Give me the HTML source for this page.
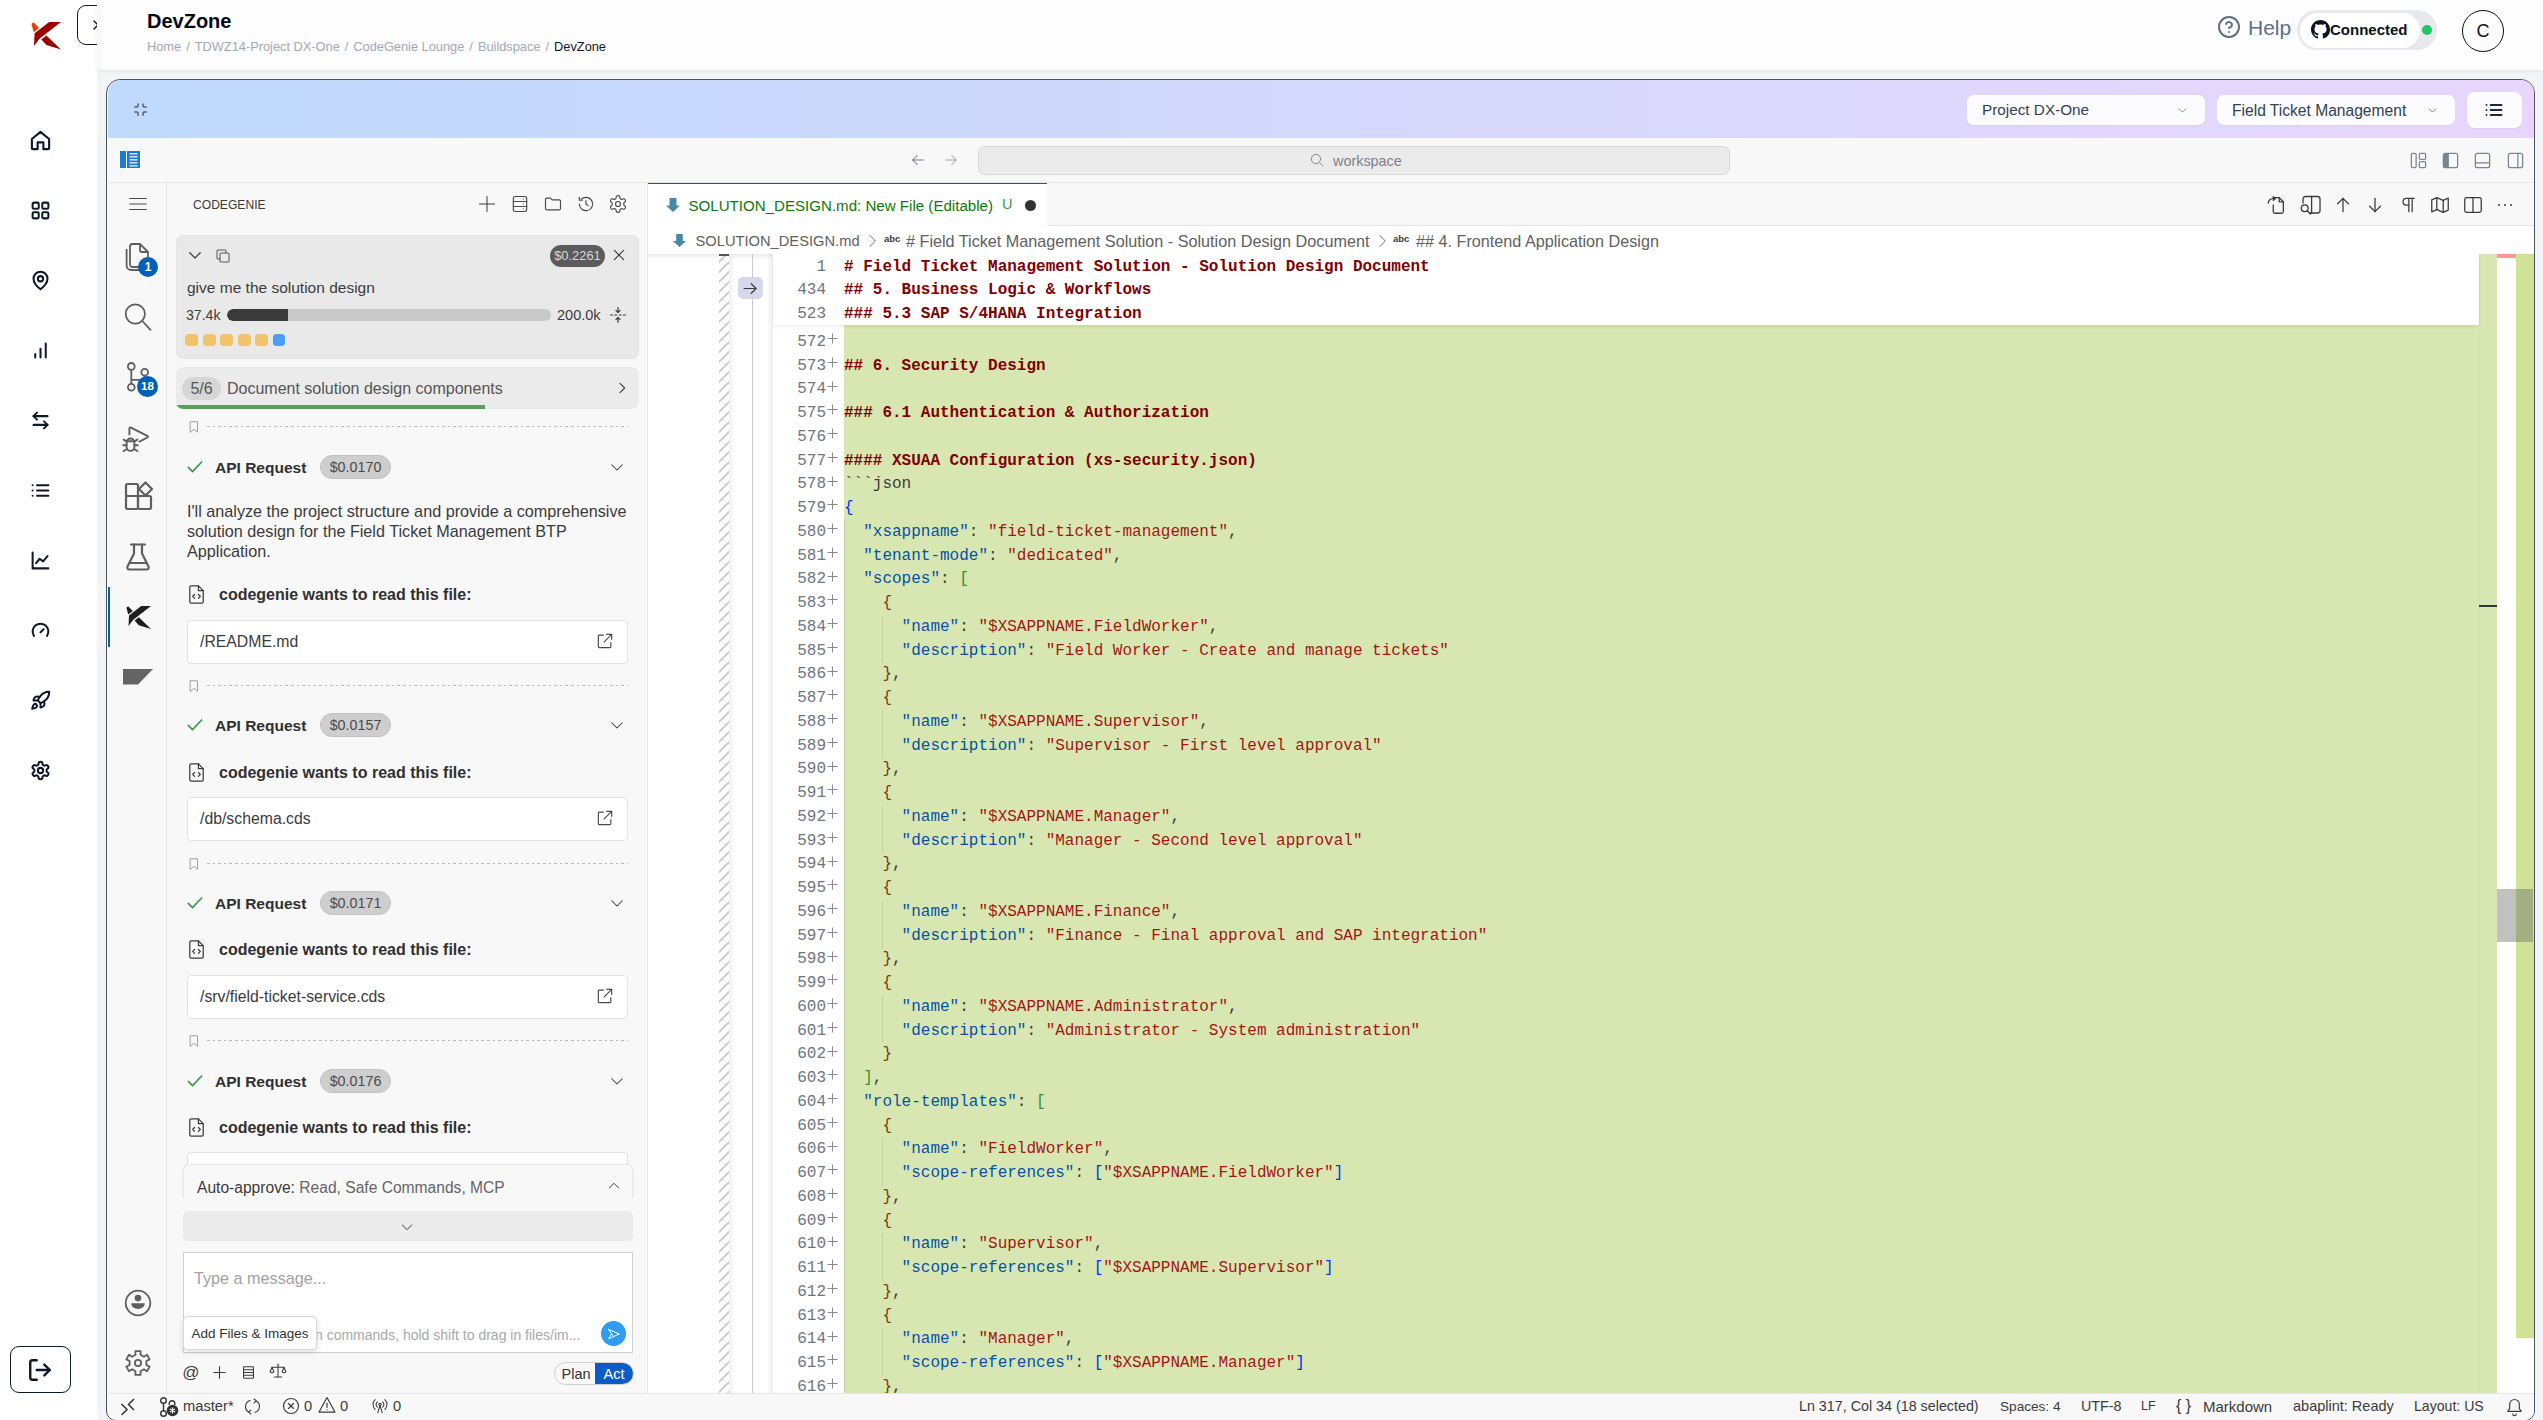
<!DOCTYPE html><html><head><meta charset="utf-8"><style>
html,body{margin:0;padding:0;width:2543px;height:1420px;overflow:hidden;background:#fff;position:relative;font-family:"Liberation Sans",sans-serif;}
</style></head><body><div style="position:absolute;left:0px;top:0px;width:97px;height:1420px;background:#ffffff;"></div>
<div style="position:absolute;left:77px;top:5px;width:40px;height:40px;border:1.5px solid #111827;border-radius:9px;background:#fff;box-sizing:border-box;"></div>
<svg style="position:absolute;left:88.00px;top:17.00px;" width="16" height="16" viewBox="0 0 24 24" fill="none" stroke="#111827" stroke-width="2.2" stroke-linecap="round" stroke-linejoin="round"><path d="M9 6l6 6-6 6"/></svg>
<div style="position:absolute;left:97px;top:70px;width:2446px;height:1350px;background:#f3f4f6;"></div>
<div style="position:absolute;left:97px;top:0px;width:2446px;height:70px;background:#fdfdfd;box-shadow:0 1px 4px rgba(0,0,0,0.07), inset 8px 0 8px -8px rgba(0,0,0,0.06);"></div>
<div style="position:absolute;left:147px;top:7.00px;height:28px;line-height:28px;font-size:20px;color:#030712;font-weight:700;font-family:'Liberation Sans', sans-serif;white-space:pre;">DevZone</div>
<div style="position:absolute;left:147px;top:37.80px;height:18px;line-height:18px;font-size:12.8px;color:#a3a8b3;font-weight:400;font-family:'Liberation Sans', sans-serif;white-space:pre;"><span style="color:#a3a9b5">Home<span style="margin:0 5px">/</span>TDWZ14-Project DX-One<span style="margin:0 5px">/</span>CodeGenie Lounge<span style="margin:0 5px">/</span>Buildspace<span style="margin:0 5px">/</span></span><span style="color:#111827">DevZone</span></div>
<svg style="position:absolute;left:2217.00px;top:15.00px;" width="24" height="24" viewBox="0 0 24 24" fill="none" stroke="#5f6f86" stroke-width="2" stroke-linecap="round" stroke-linejoin="round"><circle cx="12" cy="12" r="10"/><path d="M9.1 9a3 3 0 0 1 5.8 1c0 2-3 3-3 3"/><path d="M12 17h.01"/></svg>
<div style="position:absolute;left:2248px;top:12.50px;height:29px;line-height:29px;font-size:21px;color:#5f6f86;font-weight:400;font-family:'Liberation Sans', sans-serif;white-space:pre;">Help</div>
<div style="position:absolute;left:2297px;top:10px;width:140px;height:40px;background:#e8e9ee;border-radius:20px;"></div>
<div style="position:absolute;left:2300px;top:13px;width:120px;height:35px;background:#ffffff;border-radius:18px;"></div>
<svg style="position:absolute;left:2311px;top:20px" width="19" height="19" viewBox="0 0 16 16"><path fill="#0b1220" d="M8 0C3.58 0 0 3.58 0 8c0 3.54 2.29 6.53 5.47 7.59.4.07.55-.17.55-.38 0-.19-.01-.82-.01-1.49-2.01.37-2.53-.49-2.69-.94-.09-.23-.48-.94-.82-1.13-.28-.15-.68-.52-.01-.53.63-.01 1.08.58 1.23.82.72 1.21 1.87.87 2.33.66.07-.52.28-.87.51-1.07-1.78-.2-3.64-.89-3.64-3.95 0-.87.31-1.59.82-2.15-.08-.2-.36-1.02.08-2.12 0 0 .67-.21 2.2.82.64-.18 1.32-.27 2-.27.68 0 1.36.09 2 .27 1.53-1.04 2.2-.82 2.2-.82.44 1.1.16 1.92.08 2.12.51.56.82 1.27.82 2.15 0 3.07-1.87 3.75-3.65 3.95.29.25.54.73.54 1.48 0 1.07-.01 1.93-.01 2.2 0 .21.15.46.55.38A8.013 8.013 0 0016 8c0-4.42-3.58-8-8-8z"/></svg>
<div style="position:absolute;left:2330px;top:18.50px;height:21px;line-height:21px;font-size:15px;color:#0b1220;font-weight:700;font-family:'Liberation Sans', sans-serif;white-space:pre;">Connected</div>
<div style="position:absolute;left:2422px;top:25px;width:10px;height:10px;background:#22c55e;border-radius:50%;"></div>
<div style="position:absolute;left:2462px;top:10px;width:42px;height:42px;border:1.5px solid #111;border-radius:50%;box-sizing:border-box;"></div>
<div style="position:absolute;left:2483px;transform:translateX(-50%);top:18.50px;height:25px;line-height:25px;font-size:18px;color:#111;font-weight:400;font-family:'Liberation Sans', sans-serif;white-space:pre;">C</div>
<svg style="position:absolute;left:31px;top:22px" width="30" height="28" viewBox="0 0 30 28"><path d="M0.5 2 2.5 0.3 8.1 6 2.7 10.2z" fill="#e04000"/><path d="M3.6 11.3 18.2 0 30 0 8.4 16.7 3 24z" fill="#9e0000"/><path d="M10.3 17.5 15.4 13.6 30 27.6 15.4 23.1z" fill="#9e0000"/></svg>
<svg style="position:absolute;left:28.50px;top:128.50px;" width="23" height="23" viewBox="0 0 24 24" fill="none" stroke="#0f172a" stroke-width="2.2" stroke-linecap="round" stroke-linejoin="round"><path d="M3 10.5 12 3l9 7.5V20a1 1 0 0 1-1 1h-5v-7h-6v7H4a1 1 0 0 1-1-1z"/></svg>
<svg style="position:absolute;left:29.50px;top:199.50px;" width="21" height="21" viewBox="0 0 24 24" fill="none" stroke="#0f172a" stroke-width="2.3" stroke-linecap="round" stroke-linejoin="round"><rect x="3" y="3" width="7" height="7" rx="1.5"/><rect x="14" y="3" width="7" height="7" rx="1.5"/><rect x="3" y="14" width="7" height="7" rx="1.5"/><rect x="14" y="14" width="7" height="7" rx="1.5"/></svg>
<svg style="position:absolute;left:29.50px;top:269.50px;" width="21" height="21" viewBox="0 0 24 24" fill="none" stroke="#0f172a" stroke-width="2.3" stroke-linecap="round" stroke-linejoin="round"><path d="M20 10c0 6-8 12-8 12s-8-6-8-12a8 8 0 0 1 16 0z"/><circle cx="12" cy="10" r="3"/></svg>
<svg style="position:absolute;left:29.50px;top:339.50px;" width="21" height="21" viewBox="0 0 24 24" fill="none" stroke="#0f172a" stroke-width="2.3" stroke-linecap="round" stroke-linejoin="round"><path d="M6 20v-4"/><path d="M12 20v-10"/><path d="M18 20V4"/></svg>
<svg style="position:absolute;left:29.50px;top:409.50px;" width="21" height="21" viewBox="0 0 24 24" fill="none" stroke="#0f172a" stroke-width="2.3" stroke-linecap="round" stroke-linejoin="round"><path d="M8 3 4 7l4 4"/><path d="M4 7h16"/><path d="m16 21 4-4-4-4"/><path d="M20 17H4"/></svg>
<svg style="position:absolute;left:29.50px;top:479.50px;" width="21" height="21" viewBox="0 0 24 24" fill="none" stroke="#0f172a" stroke-width="2.3" stroke-linecap="round" stroke-linejoin="round"><path d="M8 6h13"/><path d="M8 12h13"/><path d="M8 18h13"/><path d="M3 6h.01"/><path d="M3 12h.01"/><path d="M3 18h.01"/></svg>
<svg style="position:absolute;left:29.50px;top:549.50px;" width="21" height="21" viewBox="0 0 24 24" fill="none" stroke="#0f172a" stroke-width="2.3" stroke-linecap="round" stroke-linejoin="round"><path d="M3 3v18h18"/><path d="m7 15 4-5 4 3 5-6"/></svg>
<svg style="position:absolute;left:29.50px;top:620.50px;" width="21" height="21" viewBox="0 0 24 24" fill="none" stroke="#0f172a" stroke-width="2.3" stroke-linecap="round" stroke-linejoin="round"><path d="M4.5 17a9 9 0 1 1 15 0"/><path d="m12 13 3.5-3.5"/></svg>
<svg style="position:absolute;left:29.50px;top:689.50px;" width="21" height="21" viewBox="0 0 24 24" fill="none" stroke="#0f172a" stroke-width="2.3" stroke-linecap="round" stroke-linejoin="round"><path d="M4.5 16.5c-1.5 1.26-2 5-2 5s3.74-.5 5-2c.71-.84.7-2.13-.09-2.91a2.18 2.18 0 0 0-2.91-.09z"/><path d="m12 15-3-3a22 22 0 0 1 2-3.95A12.88 12.88 0 0 1 22 2c0 2.72-.78 7.5-6 11a22.35 22.35 0 0 1-4 2z"/><path d="M9 12H4s.55-3.03 2-4c1.62-1.08 5 0 5 0"/><path d="M12 15v5s3.03-.55 4-2c1.08-1.62 0-5 0-5"/></svg>
<svg style="position:absolute;left:29.50px;top:759.50px;" width="21" height="21" viewBox="0 0 24 24" fill="none" stroke="#0f172a" stroke-width="2.3" stroke-linecap="round" stroke-linejoin="round"><path d="M12.22 2h-.44a2 2 0 0 0-2 2v.18a2 2 0 0 1-1 1.73l-.43.25a2 2 0 0 1-2 0l-.15-.08a2 2 0 0 0-2.73.73l-.22.38a2 2 0 0 0 .73 2.73l.15.1a2 2 0 0 1 1 1.72v.51a2 2 0 0 1-1 1.74l-.15.09a2 2 0 0 0-.73 2.73l.22.38a2 2 0 0 0 2.73.73l.15-.08a2 2 0 0 1 2 0l.43.25a2 2 0 0 1 1 1.73V20a2 2 0 0 0 2 2h.44a2 2 0 0 0 2-2v-.18a2 2 0 0 1 1-1.73l.43-.25a2 2 0 0 1 2 0l.15.08a2 2 0 0 0 2.73-.73l.22-.39a2 2 0 0 0-.73-2.73l-.15-.08a2 2 0 0 1-1-1.74v-.5a2 2 0 0 1 1-1.74l.15-.09a2 2 0 0 0 .73-2.73l-.22-.38a2 2 0 0 0-2.73-.73l-.15.08a2 2 0 0 1-2 0l-.43-.25a2 2 0 0 1-1-1.73V4a2 2 0 0 0-2-2z"/><circle cx="12" cy="12" r="3"/></svg>
<div style="position:absolute;left:10px;top:1346px;width:61px;height:47px;border:1.5px solid #0f172a;border-radius:9px;box-sizing:border-box;background:#fff;"></div>
<svg style="position:absolute;left:27.00px;top:1357.00px;" width="26" height="26" viewBox="0 0 24 24" fill="none" stroke="#0f172a" stroke-width="2.2" stroke-linecap="round" stroke-linejoin="round"><path d="M9 21H5a2 2 0 0 1-2-2V5a2 2 0 0 1 2-2h4"/><path d="m16 17 5-5-5-5"/><path d="M21 12H9"/></svg>
<div style="position:absolute;left:106px;top:78.8px;width:2429px;height:1342.2px;border:1.5px solid #4b5260;border-radius:14px 14px 10px 10px;box-sizing:border-box;background:#f8f8f8;overflow:hidden;"></div>
<div style="position:absolute;left:107.5px;top:79.5px;width:2426px;height:59px;background:linear-gradient(90deg,#bfdafd 0%,#cad8fc 30%,#d6d8fc 55%,#dfd7fc 78%,#e8d5fb 100%);border-radius:13px 13px 0 0;"></div>
<svg style="position:absolute;left:133.00px;top:102.00px;" width="15" height="15" viewBox="0 0 24 24" fill="none" stroke="#565e6b" stroke-width="2.4" stroke-linecap="round" stroke-linejoin="round"><path d="M8 3v3a2 2 0 0 1-2 2H3"/><path d="M21 8h-3a2 2 0 0 1-2-2V3"/><path d="M3 16h3a2 2 0 0 1 2 2v3"/><path d="M16 21v-3a2 2 0 0 1 2-2h3"/></svg>
<div style="position:absolute;left:1967px;top:95px;width:238px;height:30px;background:#fcfcfe;border-radius:7px;box-shadow:0 1px 1px rgba(0,0,0,0.04);"></div>
<div style="position:absolute;left:1982px;top:98.90px;height:21px;line-height:21px;font-size:15.3px;color:#334155;font-weight:400;font-family:'Liberation Sans', sans-serif;white-space:pre;">Project DX-One</div>
<svg style="position:absolute;left:2175.50px;top:103.50px;" width="13" height="13" viewBox="0 0 24 24" fill="none" stroke="#6b7280" stroke-width="1.6" stroke-linecap="round" stroke-linejoin="round"><path d="m6 9 6 6 6-6"/></svg>
<div style="position:absolute;left:2217px;top:95px;width:238px;height:30px;background:#fcfcfe;border-radius:7px;box-shadow:0 1px 1px rgba(0,0,0,0.04);"></div>
<div style="position:absolute;left:2232px;top:99.60px;height:22px;line-height:22px;font-size:15.6px;color:#334155;font-weight:400;font-family:'Liberation Sans', sans-serif;white-space:pre;">Field Ticket Management</div>
<svg style="position:absolute;left:2425.50px;top:103.50px;" width="13" height="13" viewBox="0 0 24 24" fill="none" stroke="#6b7280" stroke-width="1.6" stroke-linecap="round" stroke-linejoin="round"><path d="m6 9 6 6 6-6"/></svg>
<div style="position:absolute;left:2467px;top:92px;width:55px;height:36px;background:#fcfcfe;border-radius:8px;box-shadow:0 1px 1px rgba(0,0,0,0.05);"></div>
<svg style="position:absolute;left:2484.00px;top:100.00px;" width="20" height="20" viewBox="0 0 24 24" fill="none" stroke="#1f2937" stroke-width="2.4" stroke-linecap="round" stroke-linejoin="round"><path d="M8 6h13"/><path d="M8 12h13"/><path d="M8 18h13"/><path d="M3 6h.01"/><path d="M3 12h.01"/><path d="M3 18h.01"/></svg>
<div style="position:absolute;left:107.5px;top:138px;width:2426px;height:45px;background:#f8f8f8;border-bottom:1px solid #e5e5e5;box-sizing:border-box;"></div>
<svg style="position:absolute;left:120px;top:151px" width="20" height="18" viewBox="0 0 20 18"><rect x="0" y="0" width="6" height="17" fill="#1f7ccc"/><rect x="7" y="0" width="13" height="17" fill="#1f7ccc"/><rect x="9.5" y="2" width="8" height="1.6" fill="#c6def3"/><rect x="9.5" y="5" width="8" height="1.6" fill="#c6def3"/><rect x="9.5" y="8" width="8" height="1.6" fill="#c6def3"/><rect x="9.5" y="11" width="8" height="1.6" fill="#c6def3"/><rect x="9.5" y="14" width="8" height="1.6" fill="#c6def3"/></svg>
<svg style="position:absolute;left:909.00px;top:151.00px;" width="18" height="18" viewBox="0 0 24 24" fill="none" stroke="#6f7580" stroke-width="1.4" stroke-linecap="round" stroke-linejoin="round"><path d="M19 12H5"/><path d="m11 6-6 6 6 6"/></svg>
<svg style="position:absolute;left:942.00px;top:151.00px;" width="18" height="18" viewBox="0 0 24 24" fill="none" stroke="#a3a6ab" stroke-width="1.4" stroke-linecap="round" stroke-linejoin="round"><path d="M5 12h14"/><path d="m13 6 6 6-6 6"/></svg>
<div style="position:absolute;left:978px;top:146px;width:752px;height:29px;background:#ebebeb;border:1px solid #d9d9d9;border-radius:7px;box-sizing:border-box;"></div>
<svg style="position:absolute;left:1309.00px;top:152.00px;" width="16" height="16" viewBox="0 0 24 24" fill="none" stroke="#8a8a8a" stroke-width="1.5" stroke-linecap="round" stroke-linejoin="round"><circle cx="10.5" cy="10.5" r="7"/><path d="m16 16 5 5"/></svg>
<div style="position:absolute;left:1333px;top:151.00px;height:20px;line-height:20px;font-size:14.4px;color:#7b818b;font-weight:400;font-family:'Liberation Sans', sans-serif;white-space:pre;">workspace</div>
<svg style="position:absolute;left:2408.50px;top:150.50px;" width="19" height="19" viewBox="0 0 24 24" fill="none" stroke="#7b8490" stroke-width="1.6" stroke-linecap="round" stroke-linejoin="round"><rect x="3" y="3" width="6" height="18" rx="1.5"/><rect x="13" y="3" width="8" height="7.5" rx="1.5"/><rect x="13" y="13.5" width="8" height="7.5" rx="1.5"/></svg>
<svg style="position:absolute;left:2440.5px;top:150.5px" width="19" height="19" viewBox="0 0 24 24"><rect x="3" y="3" width="18" height="18" rx="2.5" fill="none" stroke="#7b8490" stroke-width="1.6"/><path d="M3 5.5a2.5 2.5 0 0 1 2.5-2.5H10v18H5.5A2.5 2.5 0 0 1 3 18.5z" fill="#7b8490"/></svg>
<svg style="position:absolute;left:2472.50px;top:150.50px;" width="19" height="19" viewBox="0 0 24 24" fill="none" stroke="#7b8490" stroke-width="1.6" stroke-linecap="round" stroke-linejoin="round"><rect x="3" y="3" width="18" height="18" rx="2.5"/><path d="M3 15h18"/></svg>
<svg style="position:absolute;left:2505.50px;top:150.50px;" width="19" height="19" viewBox="0 0 24 24" fill="none" stroke="#7b8490" stroke-width="1.6" stroke-linecap="round" stroke-linejoin="round"><rect x="3" y="3" width="18" height="18" rx="2.5"/><path d="M15 3v18"/></svg>
<div style="position:absolute;left:107.5px;top:183px;width:59.5px;height:1210px;background:#f8f8f8;border-right:1px solid #e5e5e5;box-sizing:border-box;"></div>
<div style="position:absolute;left:167px;top:183px;width:481px;height:1210px;background:#f8f8f8;border-right:1px solid #e5e5e5;box-sizing:border-box;"></div>
<div style="position:absolute;left:107.5px;top:1393px;width:2426px;height:26.5px;background:#f8f8f8;border-top:1px solid #e5e5e5;box-sizing:border-box;border-radius:0 0 9px 9px;"></div>
<svg style="position:absolute;left:127.00px;top:193.00px;" width="22" height="22" viewBox="0 0 24 24" fill="none" stroke="#4a4a4a" stroke-width="1.3" stroke-linecap="round" stroke-linejoin="round"><path d="M3 6h18"/><path d="M3 12h18"/><path d="M3 18h18"/></svg>
<svg style="position:absolute;left:124px;top:241px" width="27" height="31" viewBox="0 0 27 31" fill="none" stroke="#5f5f5f" stroke-width="1.8" stroke-linejoin="round"><path d="M6 5.5A2.5 2.5 0 0 1 8.5 3H16l8 8v12.5a2.5 2.5 0 0 1-2.5 2.5h-13A2.5 2.5 0 0 1 6 23.5z"/><path d="M16 3v6a2 2 0 0 0 2 2h6"/><path d="M2.6 8v16.5A4.5 4.5 0 0 0 7.1 29H19"/></svg>
<div style="position:absolute;left:138px;top:257px;width:20px;height:20px;background:#005fb8;border-radius:50%;"></div>
<div style="position:absolute;left:148px;transform:translateX(-50%);top:257.00px;height:20px;line-height:20px;font-size:12px;color:#fff;font-weight:700;font-family:'Liberation Sans', sans-serif;white-space:pre;">1</div>
<svg style="position:absolute;left:122px;top:300px" width="32" height="32" viewBox="0 0 32 32" fill="none" stroke="#5f5f5f" stroke-width="1.8" stroke-linecap="round"><circle cx="13.3" cy="14" r="9.6"/><path d="M20.3 21l8.2 8.8"/></svg>
<svg style="position:absolute;left:124px;top:360px" width="30" height="34" viewBox="0 0 30 34" fill="none" stroke="#5f5f5f" stroke-width="1.8"><circle cx="7.3" cy="6.4" r="3.4"/><circle cx="20.7" cy="12.2" r="3.4"/><circle cx="7.3" cy="27.3" r="3.4"/><path d="M7.3 9.8v14.1"/><path d="M7.3 19.8h8.9q4.5 0 4.5-4.2"/></svg>
<div style="position:absolute;left:137px;top:376px;width:21px;height:21px;background:#005fb8;border-radius:50%;"></div>
<div style="position:absolute;left:147.5px;transform:translateX(-50%);top:376.00px;height:21px;line-height:21px;font-size:11.5px;color:#fff;font-weight:700;font-family:'Liberation Sans', sans-serif;white-space:pre;">18</div>
<svg style="position:absolute;left:118px;top:420px" width="34" height="34" viewBox="0 0 34 34" fill="none" stroke="#5f5f5f" stroke-width="1.9" stroke-linejoin="round" stroke-linecap="round"><path d="M11.4 14.4V8.6q0-1.8 1.6-1l16.3 8.3q1.4.8 0 1.6L21.5 21.6"/><path d="M8.6 22.4a3.9 3.9 0 0 1 7.8 0v4.6a3.9 3.9 0 0 1-7.8 0z"/><path d="M8.6 21.2h7.8"/><path d="M5.6 19.6l3 1.8"/><path d="M5.2 25.3h3.4"/><path d="M5.6 31l3-1.8"/><path d="M19.4 19.6l-3 1.8"/><path d="M19.8 25.3h-3.4"/><path d="M19.4 31l-3-1.8"/></svg>
<svg style="position:absolute;left:123px;top:480px" width="31" height="32" viewBox="0 0 31 32" fill="none" stroke="#5f5f5f" stroke-width="2.2" stroke-linejoin="round"><rect x="3" y="4" width="12" height="12" rx="1.5"/><rect x="3" y="16" width="12" height="13" rx="1.5"/><rect x="15" y="16" width="13" height="13" rx="1.5"/><path d="M22.5 2.5l6.5 6.5-6.5 6.5-6.5-6.5z"/></svg>
<svg style="position:absolute;left:124px;top:542px" width="28" height="30" viewBox="0 0 28 30" fill="none" stroke="#5f5f5f" stroke-width="2.2" stroke-linejoin="round" stroke-linecap="round"><path d="M7 2.5h14"/><path d="M10 2.5v9L3.5 24.5a2 2 0 0 0 1.8 3h17.4a2 2 0 0 0 1.8-3L18 11.5v-9"/><path d="M6 21h16"/></svg>
<div style="position:absolute;left:107.6px;top:587px;width:2.2px;height:60px;background:#005fb8;"></div>
<svg style="position:absolute;left:126px;top:606px" width="25" height="23.3" viewBox="0 0 30 28"><path d="M0.5 2 2.5 0.3 8.1 6 2.7 10.2z" fill="#1e1e1e"/><path d="M3.6 11.3 18.2 0 30 0 8.4 16.7 3 24z" fill="#1e1e1e"/><path d="M10.3 17.5 15.4 13.6 30 27.6 15.4 23.1z" fill="#1e1e1e"/></svg>
<svg style="position:absolute;left:123px;top:669px" width="30" height="16" viewBox="0 0 30 16"><path d="M0 0H30L15 15.5H0z" fill="#646464"/></svg>
<svg style="position:absolute;left:123px;top:1288px" width="30" height="30" viewBox="0 0 30 30"><circle cx="15" cy="15" r="12.3" fill="none" stroke="#5f5f5f" stroke-width="1.8"/><circle cx="15" cy="10.1" r="3.3" fill="#5f5f5f"/><path d="M8.2 15.2h13.6a6.8 5.9 0 0 1-13.6 0z" fill="#5f5f5f"/></svg>
<svg style="position:absolute;left:123px;top:1348px" width="30" height="30" viewBox="0 0 30 30" fill="none" stroke="#5f5f5f" stroke-width="1.8" stroke-linejoin="round"><path d="M12.51 6.77 L12.34 3.09 L17.66 3.09 L17.49 6.77 L20.89 8.73 L23.98 6.74 L26.64 11.35 L23.37 13.04 L23.37 16.96 L26.64 18.65 L23.98 23.26 L20.89 21.27 L17.49 23.23 L17.66 26.91 L12.34 26.91 L12.51 23.23 L9.11 21.27 L6.02 23.26 L3.36 18.65 L6.63 16.96 L6.63 13.04 L3.36 11.35 L6.02 6.74 L9.11 8.73Z"/><circle cx="15" cy="15" r="3.1"/></svg>
<div style="position:absolute;left:193px;top:196.50px;height:17px;line-height:17px;font-size:12.1px;color:#3b3b3b;font-weight:400;font-family:'Liberation Sans', sans-serif;white-space:pre;">CODEGENIE</div>
<svg style="position:absolute;left:477.00px;top:194.00px;" width="20" height="20" viewBox="0 0 24 24" fill="none" stroke="#333" stroke-width="1.15" stroke-linecap="round" stroke-linejoin="round"><path d="M12 3v18"/><path d="M3 12h18"/></svg>
<svg style="position:absolute;left:510.00px;top:194.00px;" width="20" height="20" viewBox="0 0 24 24" fill="none" stroke="#4a4a4a" stroke-width="1.4" stroke-linecap="round" stroke-linejoin="round"><rect x="4" y="3" width="16" height="18" rx="2"/><path d="M4 9h16"/><path d="M4 15h16"/><path d="M16 6h.01"/><path d="M16 12h.01"/><path d="M16 18h.01"/></svg>
<svg style="position:absolute;left:543.00px;top:194.00px;" width="20" height="20" viewBox="0 0 24 24" fill="none" stroke="#4a4a4a" stroke-width="1.4" stroke-linecap="round" stroke-linejoin="round"><path d="M3 6.5A1.5 1.5 0 0 1 4.5 5H9l2 2h8.5A1.5 1.5 0 0 1 21 8.5v9a1.5 1.5 0 0 1-1.5 1.5h-15A1.5 1.5 0 0 1 3 17.5z"/></svg>
<svg style="position:absolute;left:576.00px;top:194.00px;" width="20" height="20" viewBox="0 0 24 24" fill="none" stroke="#4a4a4a" stroke-width="1.4" stroke-linecap="round" stroke-linejoin="round"><path d="M4 12a8 8 0 1 0 2.3-5.6"/><path d="M4 4v3.5h3.5"/><path d="M12 8v4l2.5 2"/></svg>
<svg style="position:absolute;left:608.00px;top:194.00px;" width="20" height="20" viewBox="0 0 24 24" fill="none" stroke="#4a4a4a" stroke-width="1.4" stroke-linecap="round" stroke-linejoin="round"><path d="M12.22 2h-.44a2 2 0 0 0-2 2v.18a2 2 0 0 1-1 1.73l-.43.25a2 2 0 0 1-2 0l-.15-.08a2 2 0 0 0-2.73.73l-.22.38a2 2 0 0 0 .73 2.73l.15.1a2 2 0 0 1 1 1.72v.51a2 2 0 0 1-1 1.74l-.15.09a2 2 0 0 0-.73 2.73l.22.38a2 2 0 0 0 2.73.73l.15-.08a2 2 0 0 1 2 0l.43.25a2 2 0 0 1 1 1.73V20a2 2 0 0 0 2 2h.44a2 2 0 0 0 2-2v-.18a2 2 0 0 1 1-1.73l.43-.25a2 2 0 0 1 2 0l.15.08a2 2 0 0 0 2.73-.73l.22-.39a2 2 0 0 0-.73-2.73l-.15-.08a2 2 0 0 1-1-1.74v-.5a2 2 0 0 1 1-1.74l.15-.09a2 2 0 0 0 .73-2.73l-.22-.38a2 2 0 0 0-2.73-.73l-.15.08a2 2 0 0 1-2 0l-.43-.25a2 2 0 0 1-1-1.73V4a2 2 0 0 0-2-2z"/><circle cx="12" cy="12" r="3"/></svg>
<div style="position:absolute;left:176px;top:235px;width:463px;height:124px;background:#e9e9e9;border-radius:7px;box-shadow:inset 0 0 0 1px #e4e4e4;"></div>
<svg style="position:absolute;left:186.00px;top:246.00px;" width="18" height="18" viewBox="0 0 24 24" fill="none" stroke="#3b3b3b" stroke-width="1.6" stroke-linecap="round" stroke-linejoin="round"><path d="m5 9 7 7 7-7"/></svg>
<svg style="position:absolute;left:214.00px;top:247.00px;" width="18" height="18" viewBox="0 0 24 24" fill="none" stroke="#5a5a5a" stroke-width="1.4" stroke-linecap="round" stroke-linejoin="round"><rect x="8" y="8" width="12" height="12" rx="1.5"/><path d="M16 8V5.5A1.5 1.5 0 0 0 14.5 4h-9A1.5 1.5 0 0 0 4 5.5v9A1.5 1.5 0 0 0 5.5 16H8"/></svg>
<div style="position:absolute;left:550px;top:245px;width:55px;height:22px;background:#5b5b5b;border-radius:11px;"></div>
<div style="position:absolute;left:577.5px;transform:translateX(-50%);top:247.00px;height:18px;line-height:18px;font-size:12.9px;color:#d8d8d8;font-weight:400;font-family:'Liberation Sans', sans-serif;white-space:pre;">$0.2261</div>
<svg style="position:absolute;left:611.00px;top:247.00px;" width="16" height="16" viewBox="0 0 24 24" fill="none" stroke="#333" stroke-width="1.6" stroke-linecap="round" stroke-linejoin="round"><path d="M5 5l14 14"/><path d="M19 5 5 19"/></svg>
<div style="position:absolute;left:187px;top:277.00px;height:22px;line-height:22px;font-size:15.5px;color:#3b3b3b;font-weight:400;font-family:'Liberation Sans', sans-serif;white-space:pre;">give me the solution design</div>
<div style="position:absolute;left:186px;top:305.00px;height:20px;line-height:20px;font-size:14.1px;color:#3b3b3b;font-weight:400;font-family:'Liberation Sans', sans-serif;white-space:pre;">37.4k</div>
<div style="position:absolute;left:227px;top:309px;width:324px;height:12px;background:#c9c9c9;border-radius:6px;overflow:hidden;"><div style="width:61px;height:12px;background:#3a3a3a;border-radius:6px 0 0 6px"></div></div>
<div style="position:absolute;left:557px;top:305.00px;height:20px;line-height:20px;font-size:14.5px;color:#3b3b3b;font-weight:400;font-family:'Liberation Sans', sans-serif;white-space:pre;">200.0k</div>
<svg style="position:absolute;left:608.00px;top:305.00px;" width="20" height="20" viewBox="0 0 24 24" fill="none" stroke="#3b3b3b" stroke-width="1.4" stroke-linecap="round" stroke-linejoin="round"><path d="M12 3v6"/><path d="m9.5 6.5 2.5 2.5 2.5-2.5"/><path d="M12 21v-6"/><path d="m9.5 17.5 2.5-2.5 2.5 2.5"/><path d="M3 12h2.5"/><path d="M8 12h2.5"/><path d="M13.5 12h2.5"/><path d="M18.5 12H21"/></svg>
<div style="position:absolute;left:185px;top:334px;width:13px;height:12px;background:#f1c46b;border-radius:3.5px;"></div>
<div style="position:absolute;left:203px;top:334px;width:13px;height:12px;background:#f1c46b;border-radius:3.5px;"></div>
<div style="position:absolute;left:220px;top:334px;width:13px;height:12px;background:#f1c46b;border-radius:3.5px;"></div>
<div style="position:absolute;left:238px;top:334px;width:13px;height:12px;background:#f1c46b;border-radius:3.5px;"></div>
<div style="position:absolute;left:255px;top:334px;width:13px;height:12px;background:#f1c46b;border-radius:3.5px;"></div>
<div style="position:absolute;left:273px;top:334px;width:12px;height:12px;background:#4d9ef6;border-radius:3.5px;"></div>
<div style="position:absolute;left:176px;top:367px;width:463px;height:42px;background:#ebebeb;border-radius:7px;overflow:hidden;"><div style="position:absolute;left:0;bottom:0;width:309px;height:4px;background:#5b9d5b"></div></div>
<div style="position:absolute;left:182px;top:377px;width:39px;height:23px;background:#d6d6d6;border-radius:11.5px;"></div>
<div style="position:absolute;left:201.5px;transform:translateX(-50%);top:377.50px;height:22px;line-height:22px;font-size:16px;color:#555;font-weight:400;font-family:'Liberation Sans', sans-serif;white-space:pre;">5/6</div>
<div style="position:absolute;left:227px;top:377.50px;height:22px;line-height:22px;font-size:16px;color:#555;font-weight:400;font-family:'Liberation Sans', sans-serif;white-space:pre;">Document solution design components</div>
<svg style="position:absolute;left:614.00px;top:380.00px;" width="16" height="16" viewBox="0 0 24 24" fill="none" stroke="#3b3b3b" stroke-width="1.6" stroke-linecap="round" stroke-linejoin="round"><path d="m9 5 7 7-7 7"/></svg>
<svg style="position:absolute;left:187.00px;top:420.00px;" width="14" height="14" viewBox="0 0 24 24" fill="none" stroke="#9a9a9a" stroke-width="1.6" stroke-linecap="round" stroke-linejoin="round"><path d="M6 3h12v18l-6-5-6 5z"/></svg>
<div style="position:absolute;left:207px;top:426px;width:421px;height:1.3px;background:repeating-linear-gradient(90deg,#b8b8b8 0,#b8b8b8 2.6px,transparent 2.6px,transparent 5.6px)"></div>
<svg style="position:absolute;left:185.00px;top:457.00px;" width="20" height="20" viewBox="0 0 24 24" fill="none" stroke="#3c9a4b" stroke-width="2" stroke-linecap="round" stroke-linejoin="round"><path d="M4 12.5l5 5L20 6"/></svg>
<div style="position:absolute;left:215px;top:456.70px;height:22px;line-height:22px;font-size:15.5px;color:#303030;font-weight:700;font-family:'Liberation Sans', sans-serif;white-space:pre;">API Request</div>
<div style="position:absolute;left:320px;top:455px;width:71px;height:24px;background:#cecece;border-radius:12px;border:1px solid #c2c2c2;box-sizing:border-box;"></div>
<div style="position:absolute;left:355.5px;transform:translateX(-50%);top:457.00px;height:20px;line-height:20px;font-size:14.3px;color:#4a4a4a;font-weight:400;font-family:'Liberation Sans', sans-serif;white-space:pre;">$0.0170</div>
<svg style="position:absolute;left:608.00px;top:458.00px;" width="18" height="18" viewBox="0 0 24 24" fill="none" stroke="#3b3b3b" stroke-width="1.4" stroke-linecap="round" stroke-linejoin="round"><path d="m5 9 7 7 7-7"/></svg>
<div style="position:absolute;left:187px;top:499.50px;height:23px;line-height:23px;font-size:16.2px;color:#3b3b3b;font-weight:400;font-family:'Liberation Sans', sans-serif;white-space:pre;">I'll analyze the project structure and provide a comprehensive</div>
<div style="position:absolute;left:187px;top:519.50px;height:23px;line-height:23px;font-size:16.2px;color:#3b3b3b;font-weight:400;font-family:'Liberation Sans', sans-serif;white-space:pre;">solution design for the Field Ticket Management BTP</div>
<div style="position:absolute;left:187px;top:539.50px;height:23px;line-height:23px;font-size:16.2px;color:#3b3b3b;font-weight:400;font-family:'Liberation Sans', sans-serif;white-space:pre;">Application.</div>
<svg style="position:absolute;left:184.50px;top:582.50px;" width="23" height="23" viewBox="0 0 24 24" fill="none" stroke="#3b3b3b" stroke-width="1.3" stroke-linecap="round" stroke-linejoin="round"><path d="M14 3H6.5A1.5 1.5 0 0 0 5 4.5v15A1.5 1.5 0 0 0 6.5 21h11a1.5 1.5 0 0 0 1.5-1.5V8z"/><path d="M14 3v5h5"/><path d="m10 12-2 2 2 2"/><path d="m14 12 2 2-2 2"/></svg>
<div style="position:absolute;left:219px;top:583.80px;height:22px;line-height:22px;font-size:16px;color:#303030;font-weight:700;font-family:'Liberation Sans', sans-serif;white-space:pre;">codegenie wants to read this file:</div>
<div style="position:absolute;left:187px;top:620px;width:441px;height:44px;background:#ffffff;border:1px solid #e3e3e3;border-radius:4px;box-sizing:border-box;"></div>
<div style="position:absolute;left:200px;top:631.00px;height:22px;line-height:22px;font-size:15.8px;color:#3b3b3b;font-weight:400;font-family:'Liberation Sans', sans-serif;white-space:pre;">/README.md</div>
<svg style="position:absolute;left:595.00px;top:631.00px;" width="20" height="20" viewBox="0 0 24 24" fill="none" stroke="#4a4a4a" stroke-width="1.4" stroke-linecap="round" stroke-linejoin="round"><path d="M14 4h6v6"/><path d="M20 4 11 13"/><path d="M19 14v5a1 1 0 0 1-1 1H5a1 1 0 0 1-1-1V6a1 1 0 0 1 1-1h5"/></svg>
<svg style="position:absolute;left:187.00px;top:679.00px;" width="14" height="14" viewBox="0 0 24 24" fill="none" stroke="#9a9a9a" stroke-width="1.6" stroke-linecap="round" stroke-linejoin="round"><path d="M6 3h12v18l-6-5-6 5z"/></svg>
<div style="position:absolute;left:207px;top:685px;width:421px;height:1.3px;background:repeating-linear-gradient(90deg,#b8b8b8 0,#b8b8b8 2.6px,transparent 2.6px,transparent 5.6px)"></div>
<svg style="position:absolute;left:185.00px;top:715.00px;" width="20" height="20" viewBox="0 0 24 24" fill="none" stroke="#3c9a4b" stroke-width="2" stroke-linecap="round" stroke-linejoin="round"><path d="M4 12.5l5 5L20 6"/></svg>
<div style="position:absolute;left:215px;top:714.70px;height:22px;line-height:22px;font-size:15.5px;color:#303030;font-weight:700;font-family:'Liberation Sans', sans-serif;white-space:pre;">API Request</div>
<div style="position:absolute;left:320px;top:713px;width:71px;height:24px;background:#cecece;border-radius:12px;border:1px solid #c2c2c2;box-sizing:border-box;"></div>
<div style="position:absolute;left:355.5px;transform:translateX(-50%);top:715.00px;height:20px;line-height:20px;font-size:14.3px;color:#4a4a4a;font-weight:400;font-family:'Liberation Sans', sans-serif;white-space:pre;">$0.0157</div>
<svg style="position:absolute;left:608.00px;top:716.00px;" width="18" height="18" viewBox="0 0 24 24" fill="none" stroke="#3b3b3b" stroke-width="1.4" stroke-linecap="round" stroke-linejoin="round"><path d="m5 9 7 7 7-7"/></svg>
<svg style="position:absolute;left:184.50px;top:760.50px;" width="23" height="23" viewBox="0 0 24 24" fill="none" stroke="#3b3b3b" stroke-width="1.3" stroke-linecap="round" stroke-linejoin="round"><path d="M14 3H6.5A1.5 1.5 0 0 0 5 4.5v15A1.5 1.5 0 0 0 6.5 21h11a1.5 1.5 0 0 0 1.5-1.5V8z"/><path d="M14 3v5h5"/><path d="m10 12-2 2 2 2"/><path d="m14 12 2 2-2 2"/></svg>
<div style="position:absolute;left:219px;top:761.80px;height:22px;line-height:22px;font-size:16px;color:#303030;font-weight:700;font-family:'Liberation Sans', sans-serif;white-space:pre;">codegenie wants to read this file:</div>
<div style="position:absolute;left:187px;top:797px;width:441px;height:44px;background:#ffffff;border:1px solid #e3e3e3;border-radius:4px;box-sizing:border-box;"></div>
<div style="position:absolute;left:200px;top:808.00px;height:22px;line-height:22px;font-size:15.8px;color:#3b3b3b;font-weight:400;font-family:'Liberation Sans', sans-serif;white-space:pre;">/db/schema.cds</div>
<svg style="position:absolute;left:595.00px;top:808.00px;" width="20" height="20" viewBox="0 0 24 24" fill="none" stroke="#4a4a4a" stroke-width="1.4" stroke-linecap="round" stroke-linejoin="round"><path d="M14 4h6v6"/><path d="M20 4 11 13"/><path d="M19 14v5a1 1 0 0 1-1 1H5a1 1 0 0 1-1-1V6a1 1 0 0 1 1-1h5"/></svg>
<svg style="position:absolute;left:187.00px;top:857.00px;" width="14" height="14" viewBox="0 0 24 24" fill="none" stroke="#9a9a9a" stroke-width="1.6" stroke-linecap="round" stroke-linejoin="round"><path d="M6 3h12v18l-6-5-6 5z"/></svg>
<div style="position:absolute;left:207px;top:863px;width:421px;height:1.3px;background:repeating-linear-gradient(90deg,#b8b8b8 0,#b8b8b8 2.6px,transparent 2.6px,transparent 5.6px)"></div>
<svg style="position:absolute;left:185.00px;top:893.00px;" width="20" height="20" viewBox="0 0 24 24" fill="none" stroke="#3c9a4b" stroke-width="2" stroke-linecap="round" stroke-linejoin="round"><path d="M4 12.5l5 5L20 6"/></svg>
<div style="position:absolute;left:215px;top:892.70px;height:22px;line-height:22px;font-size:15.5px;color:#303030;font-weight:700;font-family:'Liberation Sans', sans-serif;white-space:pre;">API Request</div>
<div style="position:absolute;left:320px;top:891px;width:71px;height:24px;background:#cecece;border-radius:12px;border:1px solid #c2c2c2;box-sizing:border-box;"></div>
<div style="position:absolute;left:355.5px;transform:translateX(-50%);top:893.00px;height:20px;line-height:20px;font-size:14.3px;color:#4a4a4a;font-weight:400;font-family:'Liberation Sans', sans-serif;white-space:pre;">$0.0171</div>
<svg style="position:absolute;left:608.00px;top:894.00px;" width="18" height="18" viewBox="0 0 24 24" fill="none" stroke="#3b3b3b" stroke-width="1.4" stroke-linecap="round" stroke-linejoin="round"><path d="m5 9 7 7 7-7"/></svg>
<svg style="position:absolute;left:184.50px;top:937.50px;" width="23" height="23" viewBox="0 0 24 24" fill="none" stroke="#3b3b3b" stroke-width="1.3" stroke-linecap="round" stroke-linejoin="round"><path d="M14 3H6.5A1.5 1.5 0 0 0 5 4.5v15A1.5 1.5 0 0 0 6.5 21h11a1.5 1.5 0 0 0 1.5-1.5V8z"/><path d="M14 3v5h5"/><path d="m10 12-2 2 2 2"/><path d="m14 12 2 2-2 2"/></svg>
<div style="position:absolute;left:219px;top:938.80px;height:22px;line-height:22px;font-size:16px;color:#303030;font-weight:700;font-family:'Liberation Sans', sans-serif;white-space:pre;">codegenie wants to read this file:</div>
<div style="position:absolute;left:187px;top:975px;width:441px;height:44px;background:#ffffff;border:1px solid #e3e3e3;border-radius:4px;box-sizing:border-box;"></div>
<div style="position:absolute;left:200px;top:986.00px;height:22px;line-height:22px;font-size:15.8px;color:#3b3b3b;font-weight:400;font-family:'Liberation Sans', sans-serif;white-space:pre;">/srv/field-ticket-service.cds</div>
<svg style="position:absolute;left:595.00px;top:986.00px;" width="20" height="20" viewBox="0 0 24 24" fill="none" stroke="#4a4a4a" stroke-width="1.4" stroke-linecap="round" stroke-linejoin="round"><path d="M14 4h6v6"/><path d="M20 4 11 13"/><path d="M19 14v5a1 1 0 0 1-1 1H5a1 1 0 0 1-1-1V6a1 1 0 0 1 1-1h5"/></svg>
<svg style="position:absolute;left:187.00px;top:1034.00px;" width="14" height="14" viewBox="0 0 24 24" fill="none" stroke="#9a9a9a" stroke-width="1.6" stroke-linecap="round" stroke-linejoin="round"><path d="M6 3h12v18l-6-5-6 5z"/></svg>
<div style="position:absolute;left:207px;top:1040px;width:421px;height:1.3px;background:repeating-linear-gradient(90deg,#b8b8b8 0,#b8b8b8 2.6px,transparent 2.6px,transparent 5.6px)"></div>
<svg style="position:absolute;left:185.00px;top:1071.00px;" width="20" height="20" viewBox="0 0 24 24" fill="none" stroke="#3c9a4b" stroke-width="2" stroke-linecap="round" stroke-linejoin="round"><path d="M4 12.5l5 5L20 6"/></svg>
<div style="position:absolute;left:215px;top:1070.70px;height:22px;line-height:22px;font-size:15.5px;color:#303030;font-weight:700;font-family:'Liberation Sans', sans-serif;white-space:pre;">API Request</div>
<div style="position:absolute;left:320px;top:1069px;width:71px;height:24px;background:#cecece;border-radius:12px;border:1px solid #c2c2c2;box-sizing:border-box;"></div>
<div style="position:absolute;left:355.5px;transform:translateX(-50%);top:1071.00px;height:20px;line-height:20px;font-size:14.3px;color:#4a4a4a;font-weight:400;font-family:'Liberation Sans', sans-serif;white-space:pre;">$0.0176</div>
<svg style="position:absolute;left:608.00px;top:1072.00px;" width="18" height="18" viewBox="0 0 24 24" fill="none" stroke="#3b3b3b" stroke-width="1.4" stroke-linecap="round" stroke-linejoin="round"><path d="m5 9 7 7 7-7"/></svg>
<svg style="position:absolute;left:184.50px;top:1115.50px;" width="23" height="23" viewBox="0 0 24 24" fill="none" stroke="#3b3b3b" stroke-width="1.3" stroke-linecap="round" stroke-linejoin="round"><path d="M14 3H6.5A1.5 1.5 0 0 0 5 4.5v15A1.5 1.5 0 0 0 6.5 21h11a1.5 1.5 0 0 0 1.5-1.5V8z"/><path d="M14 3v5h5"/><path d="m10 12-2 2 2 2"/><path d="m14 12 2 2-2 2"/></svg>
<div style="position:absolute;left:219px;top:1116.80px;height:22px;line-height:22px;font-size:16px;color:#303030;font-weight:700;font-family:'Liberation Sans', sans-serif;white-space:pre;">codegenie wants to read this file:</div>
<div style="position:absolute;left:187px;top:1152px;width:441px;height:44px;background:#ffffff;border:1px solid #e3e3e3;border-radius:4px;box-sizing:border-box;"></div>
<div style="position:absolute;left:200px;top:1163.00px;height:22px;line-height:22px;font-size:15.8px;color:#3b3b3b;font-weight:400;font-family:'Liberation Sans', sans-serif;white-space:pre;"></div>
<svg style="position:absolute;left:595.00px;top:1163.00px;" width="20" height="20" viewBox="0 0 24 24" fill="none" stroke="#4a4a4a" stroke-width="1.4" stroke-linecap="round" stroke-linejoin="round"><path d="M14 4h6v6"/><path d="M20 4 11 13"/><path d="M19 14v5a1 1 0 0 1-1 1H5a1 1 0 0 1-1-1V6a1 1 0 0 1 1-1h5"/></svg>
<div style="position:absolute;left:183px;top:1163.5px;width:450px;height:34px;background:#f8f8f8;border:1px solid #e6e6e6;border-bottom:none;border-radius:6px 6px 0 0;box-sizing:border-box;box-shadow:0 -2px 5px rgba(0,0,0,0.03);"></div>
<div style="position:absolute;left:197px;top:1177.30px;height:22px;line-height:22px;font-size:15.6px;color:#3b3b3b;font-weight:400;font-family:'Liberation Sans', sans-serif;white-space:pre;">Auto-approve: <span style="color:#656565">Read, Safe Commands, MCP</span></div>
<svg style="position:absolute;left:606.00px;top:1178.00px;" width="16" height="16" viewBox="0 0 24 24" fill="none" stroke="#3b3b3b" stroke-width="1.5" stroke-linecap="round" stroke-linejoin="round"><path d="m5 15 7-7 7 7"/></svg>
<div style="position:absolute;left:183px;top:1211px;width:450px;height:30px;background:#ebebeb;border-radius:5px;"></div>
<svg style="position:absolute;left:399.00px;top:1219.00px;" width="16" height="16" viewBox="0 0 24 24" fill="none" stroke="#3b3b3b" stroke-width="1.5" stroke-linecap="round" stroke-linejoin="round"><path d="m5 9 7 7 7-7"/></svg>
<div style="position:absolute;left:183px;top:1252px;width:450px;height:101px;background:#ffffff;border:1px solid #cfcfcf;box-sizing:border-box;"></div>
<div style="position:absolute;left:194px;top:1266.50px;height:23px;line-height:23px;font-size:16.2px;color:#a3a3a3;font-weight:400;font-family:'Liberation Sans', sans-serif;white-space:pre;">Type a message...</div>
<div style="position:absolute;left:315px;top:1325.00px;height:20px;line-height:20px;font-size:14px;color:#a9a9a9;font-weight:400;font-family:'Liberation Sans', sans-serif;white-space:pre;">n commands, hold shift to drag in files/im...</div>
<div style="position:absolute;left:601px;top:1321px;width:25px;height:25px;background:#2e9cf0;border-radius:50%;"></div>
<svg style="position:absolute;left:605.50px;top:1325.50px;" width="16" height="16" viewBox="0 0 24 24" fill="none" stroke="#ffffff" stroke-width="1.5" stroke-linecap="round" stroke-linejoin="round"><path d="M4 5l16 7-16 7 4-7z"/><path d="M8 12l3 3"/></svg>
<div style="position:absolute;left:183px;top:1316px;width:134px;height:34px;background:#ffffff;border:1px solid #d8d8d8;border-radius:4px;box-sizing:border-box;box-shadow:0 2px 6px rgba(0,0,0,0.12);"></div>
<div style="position:absolute;left:191.5px;top:1323.50px;height:19px;line-height:19px;font-size:13.5px;color:#333;font-weight:400;font-family:'Liberation Sans', sans-serif;white-space:pre;">Add Files &amp; Images</div>
<div style="position:absolute;left:191px;transform:translateX(-50%);top:1361.00px;height:24px;line-height:24px;font-size:17px;color:#3b3b3b;font-weight:400;font-family:'Liberation Sans', sans-serif;white-space:pre;">@</div>
<svg style="position:absolute;left:210.50px;top:1363.50px;" width="17" height="17" viewBox="0 0 24 24" fill="none" stroke="#3b3b3b" stroke-width="1.6" stroke-linecap="round" stroke-linejoin="round"><path d="M12 4v16"/><path d="M4 12h16"/></svg>
<svg style="position:absolute;left:239.50px;top:1363.50px;" width="17" height="17" viewBox="0 0 24 24" fill="none" stroke="#3b3b3b" stroke-width="1.5" stroke-linecap="round" stroke-linejoin="round"><rect x="5" y="4" width="14" height="16" rx="1"/><path d="M5 8h14"/><path d="M5 12h14"/><path d="M5 16h14"/></svg>
<svg style="position:absolute;left:269.00px;top:1362.00px;" width="18" height="18" viewBox="0 0 24 24" fill="none" stroke="#3b3b3b" stroke-width="1.4" stroke-linecap="round" stroke-linejoin="round"><path d="M12 3v17"/><path d="M7 20h10"/><path d="M4 7h16"/><path d="M4 7l-2.5 6a3 3 0 0 0 5 0z"/><path d="M20 7l-2.5 6a3 3 0 0 0 5 0z"/></svg>
<div style="position:absolute;left:554px;top:1362px;width:80px;height:23px;background:#f8f8f8;border:1px solid #cfcfcf;border-radius:12px;box-sizing:border-box;overflow:hidden;"><div style="position:absolute;left:40px;top:-1px;width:40px;height:23px;background:#0b5cc6"></div></div>
<div style="position:absolute;left:576px;transform:translateX(-50%);top:1363.50px;height:20px;line-height:20px;font-size:14.5px;color:#333;font-weight:400;font-family:'Liberation Sans', sans-serif;white-space:pre;">Plan</div>
<div style="position:absolute;left:614px;transform:translateX(-50%);top:1363.50px;height:20px;line-height:20px;font-size:14.5px;color:#ffffff;font-weight:400;font-family:'Liberation Sans', sans-serif;white-space:pre;">Act</div>
<svg style="position:absolute;left:118px;top:1396px" width="20" height="22" viewBox="0 0 20 22" fill="none" stroke="#333" stroke-width="1.5"><path d="M3.5 8 9 13.5 3.5 19"/><path d="M16 3 10.5 8.5 16 14"/></svg>
<svg style="position:absolute;left:158px;top:1396px" width="24" height="22" viewBox="0 0 24 22" fill="none" stroke="#333" stroke-width="1.4"><circle cx="5.5" cy="4.5" r="2.8"/><circle cx="5.5" cy="17.5" r="2.8"/><path d="M5.5 7.3v7.4"/><path d="M11.2 9V7.5a2.8 2.8 0 0 1 5.6 0V9"/><circle cx="14.5" cy="14.5" r="5.8" fill="#333" stroke="none"/><path d="M14.5 11.5v6M11.9 13l5.2 3M11.9 16l5.2-3" stroke="#fff" stroke-width="1.1"/></svg>
<div style="position:absolute;left:183px;top:1395.50px;height:21px;line-height:21px;font-size:14.7px;color:#3b3b3b;font-weight:400;font-family:'Liberation Sans', sans-serif;white-space:pre;">master*</div>
<svg style="position:absolute;left:242.50px;top:1396.50px;" width="19" height="19" viewBox="0 0 24 24" fill="none" stroke="#3b3b3b" stroke-width="1.4" stroke-linecap="round" stroke-linejoin="round"><path d="M9 4.5A8 8 0 0 0 7 19"/><path d="M15 19.5A8 8 0 0 0 17 5"/><path d="M14 2.5 16.8 5 14 7.5"/><path d="M10 21.5 7.2 19 10 16.5"/></svg>
<svg style="position:absolute;left:281.00px;top:1396.00px;" width="20" height="20" viewBox="0 0 24 24" fill="none" stroke="#3b3b3b" stroke-width="1.4" stroke-linecap="round" stroke-linejoin="round"><circle cx="12" cy="12" r="9"/><path d="m9 9 6 6"/><path d="m15 9-6 6"/></svg>
<div style="position:absolute;left:304px;top:1395.50px;height:21px;line-height:21px;font-size:14.7px;color:#3b3b3b;font-weight:400;font-family:'Liberation Sans', sans-serif;white-space:pre;">0</div>
<svg style="position:absolute;left:317.00px;top:1395.00px;" width="20" height="20" viewBox="0 0 24 24" fill="none" stroke="#3b3b3b" stroke-width="1.4" stroke-linecap="round" stroke-linejoin="round"><path d="M12 3 2.5 20.5h19z"/><path d="M12 10v5"/><path d="M12 17.5h.01"/></svg>
<div style="position:absolute;left:340px;top:1395.50px;height:21px;line-height:21px;font-size:14.7px;color:#3b3b3b;font-weight:400;font-family:'Liberation Sans', sans-serif;white-space:pre;">0</div>
<svg style="position:absolute;left:371.00px;top:1397.00px;" width="18" height="18" viewBox="0 0 24 24" fill="none" stroke="#3b3b3b" stroke-width="1.4" stroke-linecap="round" stroke-linejoin="round"><circle cx="12" cy="10" r="1.5"/><path d="M8.5 6.5a5 5 0 0 0 0 7"/><path d="M15.5 6.5a5 5 0 0 1 0 7"/><path d="M5.5 3.5a9 9 0 0 0 0 13"/><path d="M18.5 3.5a9 9 0 0 1 0 13"/><path d="M12 11.5 9 21"/><path d="M12 11.5 15 21"/></svg>
<div style="position:absolute;left:393px;top:1395.50px;height:21px;line-height:21px;font-size:14.7px;color:#3b3b3b;font-weight:400;font-family:'Liberation Sans', sans-serif;white-space:pre;">0</div>
<div style="position:absolute;left:648px;top:183px;width:1886px;height:43px;background:#f8f8f8;border-bottom:1px solid #e5e5e5;box-sizing:border-box;"></div>
<div style="position:absolute;left:648px;top:183px;width:399px;height:43px;background:#ffffff;border-top:1.5px solid #005fb8;box-sizing:border-box;"></div>
<svg style="position:absolute;left:665px;top:197px" width="16" height="16" viewBox="0 0 16 16"><path d="M4.5 1h7v7.5H15L8 15 1 8.5h3.5z" fill="#4a88a8"/></svg>
<div style="position:absolute;left:688.5px;top:194.50px;height:21px;line-height:21px;font-size:15.1px;color:#0b7a0b;font-weight:400;font-family:'Liberation Sans', sans-serif;white-space:pre;">SOLUTION_DESIGN.md: New File (Editable)</div>
<div style="position:absolute;left:1002px;top:194.00px;height:20px;line-height:20px;font-size:14.5px;color:#3c9a3c;font-weight:400;font-family:'Liberation Sans', sans-serif;white-space:pre;">U</div>
<div style="position:absolute;left:1024.5px;top:199.5px;width:11px;height:11px;background:#333;border-radius:50%;"></div>
<svg style="position:absolute;left:2265.00px;top:194.00px;" width="22" height="22" viewBox="0 0 24 24" fill="none" stroke="#3b3b3b" stroke-width="1.4" stroke-linecap="round" stroke-linejoin="round"><path d="M9 5.5V4h6.5L20 8.5V19a2 2 0 0 1-2 2h-7a2 2 0 0 1-2-2v-7"/><path d="M15.5 4v4.5H20"/><path d="M3.5 10a5 5 0 0 1 5-5H11"/><path d="m9 3 2.2 2L9 7"/></svg>
<svg style="position:absolute;left:2298.00px;top:193.00px;" width="24" height="24" viewBox="0 0 24 24" fill="none" stroke="#3b3b3b" stroke-width="1.3" stroke-linecap="round" stroke-linejoin="round"><path d="M5 10V6a2.5 2.5 0 0 1 2.5-2.5h12A2.5 2.5 0 0 1 22 6v11.5a2.5 2.5 0 0 1-2.5 2.5H12"/><path d="M13.6 3.5V20"/><circle cx="6.7" cy="15.2" r="3.4"/><path d="m9.2 17.7 3.3 3.3"/></svg>
<svg style="position:absolute;left:2333.00px;top:195.00px;" width="20" height="20" viewBox="0 0 24 24" fill="none" stroke="#3b3b3b" stroke-width="1.5" stroke-linecap="round" stroke-linejoin="round"><path d="M12 20V4"/><path d="m5.5 10.5 6.5-6.5 6.5 6.5"/></svg>
<svg style="position:absolute;left:2365.00px;top:195.00px;" width="20" height="20" viewBox="0 0 24 24" fill="none" stroke="#3b3b3b" stroke-width="1.5" stroke-linecap="round" stroke-linejoin="round"><path d="M12 4v16"/><path d="m5.5 13.5 6.5 6.5 6.5-6.5"/></svg>
<svg style="position:absolute;left:2398.00px;top:195.00px;" width="20" height="20" viewBox="0 0 24 24" fill="none" stroke="#3b3b3b" stroke-width="1.5" stroke-linecap="round" stroke-linejoin="round"><path d="M13 4v16"/><path d="M17 4v16"/><path d="M19.5 4H10a4 4 0 0 0 0 8h3"/></svg>
<svg style="position:absolute;left:2429.00px;top:194.00px;" width="22" height="22" viewBox="0 0 24 24" fill="none" stroke="#3b3b3b" stroke-width="1.4" stroke-linecap="round" stroke-linejoin="round"><path d="M3 6.5 8.5 4l7 3 5.5-2.5v13L15.5 20l-7-3L3 19.5z"/><path d="M8.5 4v13"/><path d="M15.5 7v13"/></svg>
<svg style="position:absolute;left:2462.00px;top:194.00px;" width="22" height="22" viewBox="0 0 24 24" fill="none" stroke="#3b3b3b" stroke-width="1.4" stroke-linecap="round" stroke-linejoin="round"><rect x="3" y="4" width="18" height="16" rx="2"/><path d="M12 4v16"/></svg>
<div style="position:absolute;left:2497.7px;top:203.7px;width:2.6px;height:2.6px;background:#3b3b3b;border-radius:50%;"></div>
<div style="position:absolute;left:2503.7px;top:203.7px;width:2.6px;height:2.6px;background:#3b3b3b;border-radius:50%;"></div>
<div style="position:absolute;left:2509.7px;top:203.7px;width:2.6px;height:2.6px;background:#3b3b3b;border-radius:50%;"></div>
<div style="position:absolute;left:648px;top:226px;width:1886px;height:28px;background:#ffffff;"></div>
<svg style="position:absolute;left:672px;top:233px" width="15" height="15" viewBox="0 0 16 16"><path d="M4.5 1h7v7.5H15L8 15 1 8.5h3.5z" fill="#4a88a8"/></svg>
<div style="position:absolute;left:695.5px;top:230.50px;height:21px;line-height:21px;font-size:14.7px;color:#616161;font-weight:400;font-family:'Liberation Sans', sans-serif;white-space:pre;">SOLUTION_DESIGN.md</div>
<svg style="position:absolute;left:863.00px;top:232.00px;" width="18" height="18" viewBox="0 0 24 24" fill="none" stroke="#616161" stroke-width="1.2" stroke-linecap="round" stroke-linejoin="round"><path d="m9 4.5 7.5 7.5-7.5 7.5"/></svg>
<div style="position:absolute;left:884px;top:231.50px;height:13px;line-height:13px;font-size:9.5px;color:#3b3b3b;font-weight:700;font-family:'Liberation Sans', sans-serif;white-space:pre;">abc</div>
<div style="position:absolute;left:906px;top:229.50px;height:23px;line-height:23px;font-size:16.2px;color:#616161;font-weight:400;font-family:'Liberation Sans', sans-serif;white-space:pre;"># Field Ticket Management Solution - Solution Design Document</div>
<svg style="position:absolute;left:1373.00px;top:232.00px;" width="18" height="18" viewBox="0 0 24 24" fill="none" stroke="#616161" stroke-width="1.2" stroke-linecap="round" stroke-linejoin="round"><path d="m9 4.5 7.5 7.5-7.5 7.5"/></svg>
<div style="position:absolute;left:1393px;top:231.50px;height:13px;line-height:13px;font-size:9.5px;color:#3b3b3b;font-weight:700;font-family:'Liberation Sans', sans-serif;white-space:pre;">abc</div>
<div style="position:absolute;left:1416px;top:229.50px;height:23px;line-height:23px;font-size:16.2px;color:#616161;font-weight:400;font-family:'Liberation Sans', sans-serif;white-space:pre;">## 4. Frontend Application Design</div>
<div style="position:absolute;left:648px;top:254px;width:1886px;height:1139px;background:#ffffff;overflow:hidden;"></div>
<div style="position:absolute;left:648px;top:254px;width:125px;height:6px;background:linear-gradient(#00000012,#00000000);"></div>
<div style="position:absolute;left:719px;top:254px;width:10px;height:1139px;background:repeating-linear-gradient(135deg,#ffffff 0px,#ffffff 4.7px,#cfcfcf 4.7px,#cfcfcf 7.07px);"></div>
<div style="position:absolute;left:719px;top:254px;width:10px;height:2px;background:#555;"></div>
<div style="position:absolute;left:729px;top:254px;width:6px;height:1139px;background:linear-gradient(90deg,#00000010,#00000000);"></div>
<div style="position:absolute;left:751.5px;top:254px;width:1.6px;height:1139px;background:#c9c9c9;"></div>
<div style="position:absolute;left:738px;top:277px;width:25px;height:22px;background:#d5d8ea;border-radius:5px;"></div>
<svg style="position:absolute;left:741.00px;top:278.50px;" width="19" height="19" viewBox="0 0 24 24" fill="none" stroke="#3b3b3b" stroke-width="1.5" stroke-linecap="round" stroke-linejoin="round"><path d="M4 12h15"/><path d="m13 6 6 6-6 6"/></svg>
<div style="position:absolute;left:766px;top:254px;width:7px;height:1139px;background:linear-gradient(90deg,#00000000,#00000010);"></div>
<div style="position:absolute;left:844px;top:325px;width:1653px;height:1068px;background:#d8e7b1;"></div>
<div style="position:absolute;left:2479px;top:254px;width:18px;height:71px;background:#d8e7b1;"></div>
<div style="position:absolute;left:2479px;top:254px;width:1px;height:1139px;background:#d2e0ad;"></div>
<div style="position:absolute;left:2497px;top:254px;width:1px;height:1139px;background:#ffffff;"></div>
<div style="position:absolute;left:2516px;top:254px;width:17.5px;height:1084px;background:#cfe295;"></div>
<div style="position:absolute;left:2497px;top:254px;width:19px;height:4px;background:#ff9696;"></div>
<div style="position:absolute;left:2497px;top:889px;width:36px;height:53px;background:rgba(100,100,100,0.40);"></div>
<div style="position:absolute;left:2479px;top:605px;width:18px;height:1.6px;background:#333;"></div>
<div style="position:absolute;left:0;top:254px;width:2479px;height:1139px;overflow:hidden;font-family:'Liberation Mono', monospace;font-size:16px;"><div style="position:absolute;left:0;top:76.90px;height:23.75px;width:100%"><div style="position:absolute;right:1653px;top:0;line-height:23.75px;color:#6e7681">572</div><svg style="position:absolute;left:826.7px;top:2.3px" width="11" height="11" viewBox="0 0 11 11"><path d="M5.5 0.5v10M0.5 5.5h10" stroke="#8c8c8c" stroke-width="1.05"/></svg><div style="position:absolute;left:844px;top:0;line-height:23.75px;white-space:pre;color:#3b3b3b"></div></div><div style="position:absolute;left:0;top:100.65px;height:23.75px;width:100%"><div style="position:absolute;right:1653px;top:0;line-height:23.75px;color:#6e7681">573</div><svg style="position:absolute;left:826.7px;top:2.3px" width="11" height="11" viewBox="0 0 11 11"><path d="M5.5 0.5v10M0.5 5.5h10" stroke="#8c8c8c" stroke-width="1.05"/></svg><div style="position:absolute;left:844px;top:0;line-height:23.75px;white-space:pre;color:#3b3b3b"><span style="color:#800000;font-weight:700;">## 6. Security Design</span></div></div><div style="position:absolute;left:0;top:124.40px;height:23.75px;width:100%"><div style="position:absolute;right:1653px;top:0;line-height:23.75px;color:#6e7681">574</div><svg style="position:absolute;left:826.7px;top:2.3px" width="11" height="11" viewBox="0 0 11 11"><path d="M5.5 0.5v10M0.5 5.5h10" stroke="#8c8c8c" stroke-width="1.05"/></svg><div style="position:absolute;left:844px;top:0;line-height:23.75px;white-space:pre;color:#3b3b3b"></div></div><div style="position:absolute;left:0;top:148.15px;height:23.75px;width:100%"><div style="position:absolute;right:1653px;top:0;line-height:23.75px;color:#6e7681">575</div><svg style="position:absolute;left:826.7px;top:2.3px" width="11" height="11" viewBox="0 0 11 11"><path d="M5.5 0.5v10M0.5 5.5h10" stroke="#8c8c8c" stroke-width="1.05"/></svg><div style="position:absolute;left:844px;top:0;line-height:23.75px;white-space:pre;color:#3b3b3b"><span style="color:#800000;font-weight:700;">### 6.1 Authentication &amp; Authorization</span></div></div><div style="position:absolute;left:0;top:171.90px;height:23.75px;width:100%"><div style="position:absolute;right:1653px;top:0;line-height:23.75px;color:#6e7681">576</div><svg style="position:absolute;left:826.7px;top:2.3px" width="11" height="11" viewBox="0 0 11 11"><path d="M5.5 0.5v10M0.5 5.5h10" stroke="#8c8c8c" stroke-width="1.05"/></svg><div style="position:absolute;left:844px;top:0;line-height:23.75px;white-space:pre;color:#3b3b3b"></div></div><div style="position:absolute;left:0;top:195.65px;height:23.75px;width:100%"><div style="position:absolute;right:1653px;top:0;line-height:23.75px;color:#6e7681">577</div><svg style="position:absolute;left:826.7px;top:2.3px" width="11" height="11" viewBox="0 0 11 11"><path d="M5.5 0.5v10M0.5 5.5h10" stroke="#8c8c8c" stroke-width="1.05"/></svg><div style="position:absolute;left:844px;top:0;line-height:23.75px;white-space:pre;color:#3b3b3b"><span style="color:#800000;font-weight:700;">#### XSUAA Configuration (xs-security.json)</span></div></div><div style="position:absolute;left:0;top:219.40px;height:23.75px;width:100%"><div style="position:absolute;right:1653px;top:0;line-height:23.75px;color:#6e7681">578</div><svg style="position:absolute;left:826.7px;top:2.3px" width="11" height="11" viewBox="0 0 11 11"><path d="M5.5 0.5v10M0.5 5.5h10" stroke="#8c8c8c" stroke-width="1.05"/></svg><div style="position:absolute;left:844px;top:0;line-height:23.75px;white-space:pre;color:#3b3b3b"><span style="color:#3b3b3b;">```json</span></div></div><div style="position:absolute;left:0;top:243.15px;height:23.75px;width:100%"><div style="position:absolute;right:1653px;top:0;line-height:23.75px;color:#6e7681">579</div><svg style="position:absolute;left:826.7px;top:2.3px" width="11" height="11" viewBox="0 0 11 11"><path d="M5.5 0.5v10M0.5 5.5h10" stroke="#8c8c8c" stroke-width="1.05"/></svg><div style="position:absolute;left:844px;top:0;line-height:23.75px;white-space:pre;color:#3b3b3b"><span style="color:#0431fa;">{</span></div></div><div style="position:absolute;left:0;top:266.90px;height:23.75px;width:100%"><div style="position:absolute;right:1653px;top:0;line-height:23.75px;color:#6e7681">580</div><svg style="position:absolute;left:826.7px;top:2.3px" width="11" height="11" viewBox="0 0 11 11"><path d="M5.5 0.5v10M0.5 5.5h10" stroke="#8c8c8c" stroke-width="1.05"/></svg><div style="position:absolute;left:844px;top:0;line-height:23.75px;white-space:pre;color:#3b3b3b">  <span style="color:#0451a5;">"xsappname"</span><span style="color:#3b3b3b;">: </span><span style="color:#a31515;">"field-ticket-management"</span><span style="color:#3b3b3b;">,</span></div></div><div style="position:absolute;left:0;top:290.65px;height:23.75px;width:100%"><div style="position:absolute;right:1653px;top:0;line-height:23.75px;color:#6e7681">581</div><svg style="position:absolute;left:826.7px;top:2.3px" width="11" height="11" viewBox="0 0 11 11"><path d="M5.5 0.5v10M0.5 5.5h10" stroke="#8c8c8c" stroke-width="1.05"/></svg><div style="position:absolute;left:844px;top:0;line-height:23.75px;white-space:pre;color:#3b3b3b">  <span style="color:#0451a5;">"tenant-mode"</span><span style="color:#3b3b3b;">: </span><span style="color:#a31515;">"dedicated"</span><span style="color:#3b3b3b;">,</span></div></div><div style="position:absolute;left:0;top:314.40px;height:23.75px;width:100%"><div style="position:absolute;right:1653px;top:0;line-height:23.75px;color:#6e7681">582</div><svg style="position:absolute;left:826.7px;top:2.3px" width="11" height="11" viewBox="0 0 11 11"><path d="M5.5 0.5v10M0.5 5.5h10" stroke="#8c8c8c" stroke-width="1.05"/></svg><div style="position:absolute;left:844px;top:0;line-height:23.75px;white-space:pre;color:#3b3b3b">  <span style="color:#0451a5;">"scopes"</span><span style="color:#3b3b3b;">: </span><span style="color:#319331;">[</span></div></div><div style="position:absolute;left:0;top:338.15px;height:23.75px;width:100%"><div style="position:absolute;right:1653px;top:0;line-height:23.75px;color:#6e7681">583</div><svg style="position:absolute;left:826.7px;top:2.3px" width="11" height="11" viewBox="0 0 11 11"><path d="M5.5 0.5v10M0.5 5.5h10" stroke="#8c8c8c" stroke-width="1.05"/></svg><div style="position:absolute;left:844px;top:0;line-height:23.75px;white-space:pre;color:#3b3b3b">    <span style="color:#7b3814;">{</span></div></div><div style="position:absolute;left:0;top:361.90px;height:23.75px;width:100%"><div style="position:absolute;right:1653px;top:0;line-height:23.75px;color:#6e7681">584</div><svg style="position:absolute;left:826.7px;top:2.3px" width="11" height="11" viewBox="0 0 11 11"><path d="M5.5 0.5v10M0.5 5.5h10" stroke="#8c8c8c" stroke-width="1.05"/></svg><div style="position:absolute;left:844px;top:0;line-height:23.75px;white-space:pre;color:#3b3b3b">      <span style="color:#0451a5;">"name"</span><span style="color:#3b3b3b;">: </span><span style="color:#a31515;">"$XSAPPNAME.FieldWorker"</span><span style="color:#3b3b3b;">,</span></div></div><div style="position:absolute;left:0;top:385.65px;height:23.75px;width:100%"><div style="position:absolute;right:1653px;top:0;line-height:23.75px;color:#6e7681">585</div><svg style="position:absolute;left:826.7px;top:2.3px" width="11" height="11" viewBox="0 0 11 11"><path d="M5.5 0.5v10M0.5 5.5h10" stroke="#8c8c8c" stroke-width="1.05"/></svg><div style="position:absolute;left:844px;top:0;line-height:23.75px;white-space:pre;color:#3b3b3b">      <span style="color:#0451a5;">"description"</span><span style="color:#3b3b3b;">: </span><span style="color:#a31515;">"Field Worker - Create and manage tickets"</span></div></div><div style="position:absolute;left:0;top:409.40px;height:23.75px;width:100%"><div style="position:absolute;right:1653px;top:0;line-height:23.75px;color:#6e7681">586</div><svg style="position:absolute;left:826.7px;top:2.3px" width="11" height="11" viewBox="0 0 11 11"><path d="M5.5 0.5v10M0.5 5.5h10" stroke="#8c8c8c" stroke-width="1.05"/></svg><div style="position:absolute;left:844px;top:0;line-height:23.75px;white-space:pre;color:#3b3b3b">    <span style="color:#7b3814;">}</span><span style="color:#3b3b3b;">,</span></div></div><div style="position:absolute;left:0;top:433.15px;height:23.75px;width:100%"><div style="position:absolute;right:1653px;top:0;line-height:23.75px;color:#6e7681">587</div><svg style="position:absolute;left:826.7px;top:2.3px" width="11" height="11" viewBox="0 0 11 11"><path d="M5.5 0.5v10M0.5 5.5h10" stroke="#8c8c8c" stroke-width="1.05"/></svg><div style="position:absolute;left:844px;top:0;line-height:23.75px;white-space:pre;color:#3b3b3b">    <span style="color:#7b3814;">{</span></div></div><div style="position:absolute;left:0;top:456.90px;height:23.75px;width:100%"><div style="position:absolute;right:1653px;top:0;line-height:23.75px;color:#6e7681">588</div><svg style="position:absolute;left:826.7px;top:2.3px" width="11" height="11" viewBox="0 0 11 11"><path d="M5.5 0.5v10M0.5 5.5h10" stroke="#8c8c8c" stroke-width="1.05"/></svg><div style="position:absolute;left:844px;top:0;line-height:23.75px;white-space:pre;color:#3b3b3b">      <span style="color:#0451a5;">"name"</span><span style="color:#3b3b3b;">: </span><span style="color:#a31515;">"$XSAPPNAME.Supervisor"</span><span style="color:#3b3b3b;">,</span></div></div><div style="position:absolute;left:0;top:480.65px;height:23.75px;width:100%"><div style="position:absolute;right:1653px;top:0;line-height:23.75px;color:#6e7681">589</div><svg style="position:absolute;left:826.7px;top:2.3px" width="11" height="11" viewBox="0 0 11 11"><path d="M5.5 0.5v10M0.5 5.5h10" stroke="#8c8c8c" stroke-width="1.05"/></svg><div style="position:absolute;left:844px;top:0;line-height:23.75px;white-space:pre;color:#3b3b3b">      <span style="color:#0451a5;">"description"</span><span style="color:#3b3b3b;">: </span><span style="color:#a31515;">"Supervisor - First level approval"</span></div></div><div style="position:absolute;left:0;top:504.40px;height:23.75px;width:100%"><div style="position:absolute;right:1653px;top:0;line-height:23.75px;color:#6e7681">590</div><svg style="position:absolute;left:826.7px;top:2.3px" width="11" height="11" viewBox="0 0 11 11"><path d="M5.5 0.5v10M0.5 5.5h10" stroke="#8c8c8c" stroke-width="1.05"/></svg><div style="position:absolute;left:844px;top:0;line-height:23.75px;white-space:pre;color:#3b3b3b">    <span style="color:#7b3814;">}</span><span style="color:#3b3b3b;">,</span></div></div><div style="position:absolute;left:0;top:528.15px;height:23.75px;width:100%"><div style="position:absolute;right:1653px;top:0;line-height:23.75px;color:#6e7681">591</div><svg style="position:absolute;left:826.7px;top:2.3px" width="11" height="11" viewBox="0 0 11 11"><path d="M5.5 0.5v10M0.5 5.5h10" stroke="#8c8c8c" stroke-width="1.05"/></svg><div style="position:absolute;left:844px;top:0;line-height:23.75px;white-space:pre;color:#3b3b3b">    <span style="color:#7b3814;">{</span></div></div><div style="position:absolute;left:0;top:551.90px;height:23.75px;width:100%"><div style="position:absolute;right:1653px;top:0;line-height:23.75px;color:#6e7681">592</div><svg style="position:absolute;left:826.7px;top:2.3px" width="11" height="11" viewBox="0 0 11 11"><path d="M5.5 0.5v10M0.5 5.5h10" stroke="#8c8c8c" stroke-width="1.05"/></svg><div style="position:absolute;left:844px;top:0;line-height:23.75px;white-space:pre;color:#3b3b3b">      <span style="color:#0451a5;">"name"</span><span style="color:#3b3b3b;">: </span><span style="color:#a31515;">"$XSAPPNAME.Manager"</span><span style="color:#3b3b3b;">,</span></div></div><div style="position:absolute;left:0;top:575.65px;height:23.75px;width:100%"><div style="position:absolute;right:1653px;top:0;line-height:23.75px;color:#6e7681">593</div><svg style="position:absolute;left:826.7px;top:2.3px" width="11" height="11" viewBox="0 0 11 11"><path d="M5.5 0.5v10M0.5 5.5h10" stroke="#8c8c8c" stroke-width="1.05"/></svg><div style="position:absolute;left:844px;top:0;line-height:23.75px;white-space:pre;color:#3b3b3b">      <span style="color:#0451a5;">"description"</span><span style="color:#3b3b3b;">: </span><span style="color:#a31515;">"Manager - Second level approval"</span></div></div><div style="position:absolute;left:0;top:599.40px;height:23.75px;width:100%"><div style="position:absolute;right:1653px;top:0;line-height:23.75px;color:#6e7681">594</div><svg style="position:absolute;left:826.7px;top:2.3px" width="11" height="11" viewBox="0 0 11 11"><path d="M5.5 0.5v10M0.5 5.5h10" stroke="#8c8c8c" stroke-width="1.05"/></svg><div style="position:absolute;left:844px;top:0;line-height:23.75px;white-space:pre;color:#3b3b3b">    <span style="color:#7b3814;">}</span><span style="color:#3b3b3b;">,</span></div></div><div style="position:absolute;left:0;top:623.15px;height:23.75px;width:100%"><div style="position:absolute;right:1653px;top:0;line-height:23.75px;color:#6e7681">595</div><svg style="position:absolute;left:826.7px;top:2.3px" width="11" height="11" viewBox="0 0 11 11"><path d="M5.5 0.5v10M0.5 5.5h10" stroke="#8c8c8c" stroke-width="1.05"/></svg><div style="position:absolute;left:844px;top:0;line-height:23.75px;white-space:pre;color:#3b3b3b">    <span style="color:#7b3814;">{</span></div></div><div style="position:absolute;left:0;top:646.90px;height:23.75px;width:100%"><div style="position:absolute;right:1653px;top:0;line-height:23.75px;color:#6e7681">596</div><svg style="position:absolute;left:826.7px;top:2.3px" width="11" height="11" viewBox="0 0 11 11"><path d="M5.5 0.5v10M0.5 5.5h10" stroke="#8c8c8c" stroke-width="1.05"/></svg><div style="position:absolute;left:844px;top:0;line-height:23.75px;white-space:pre;color:#3b3b3b">      <span style="color:#0451a5;">"name"</span><span style="color:#3b3b3b;">: </span><span style="color:#a31515;">"$XSAPPNAME.Finance"</span><span style="color:#3b3b3b;">,</span></div></div><div style="position:absolute;left:0;top:670.65px;height:23.75px;width:100%"><div style="position:absolute;right:1653px;top:0;line-height:23.75px;color:#6e7681">597</div><svg style="position:absolute;left:826.7px;top:2.3px" width="11" height="11" viewBox="0 0 11 11"><path d="M5.5 0.5v10M0.5 5.5h10" stroke="#8c8c8c" stroke-width="1.05"/></svg><div style="position:absolute;left:844px;top:0;line-height:23.75px;white-space:pre;color:#3b3b3b">      <span style="color:#0451a5;">"description"</span><span style="color:#3b3b3b;">: </span><span style="color:#a31515;">"Finance - Final approval and SAP integration"</span></div></div><div style="position:absolute;left:0;top:694.40px;height:23.75px;width:100%"><div style="position:absolute;right:1653px;top:0;line-height:23.75px;color:#6e7681">598</div><svg style="position:absolute;left:826.7px;top:2.3px" width="11" height="11" viewBox="0 0 11 11"><path d="M5.5 0.5v10M0.5 5.5h10" stroke="#8c8c8c" stroke-width="1.05"/></svg><div style="position:absolute;left:844px;top:0;line-height:23.75px;white-space:pre;color:#3b3b3b">    <span style="color:#7b3814;">}</span><span style="color:#3b3b3b;">,</span></div></div><div style="position:absolute;left:0;top:718.15px;height:23.75px;width:100%"><div style="position:absolute;right:1653px;top:0;line-height:23.75px;color:#6e7681">599</div><svg style="position:absolute;left:826.7px;top:2.3px" width="11" height="11" viewBox="0 0 11 11"><path d="M5.5 0.5v10M0.5 5.5h10" stroke="#8c8c8c" stroke-width="1.05"/></svg><div style="position:absolute;left:844px;top:0;line-height:23.75px;white-space:pre;color:#3b3b3b">    <span style="color:#7b3814;">{</span></div></div><div style="position:absolute;left:0;top:741.90px;height:23.75px;width:100%"><div style="position:absolute;right:1653px;top:0;line-height:23.75px;color:#6e7681">600</div><svg style="position:absolute;left:826.7px;top:2.3px" width="11" height="11" viewBox="0 0 11 11"><path d="M5.5 0.5v10M0.5 5.5h10" stroke="#8c8c8c" stroke-width="1.05"/></svg><div style="position:absolute;left:844px;top:0;line-height:23.75px;white-space:pre;color:#3b3b3b">      <span style="color:#0451a5;">"name"</span><span style="color:#3b3b3b;">: </span><span style="color:#a31515;">"$XSAPPNAME.Administrator"</span><span style="color:#3b3b3b;">,</span></div></div><div style="position:absolute;left:0;top:765.65px;height:23.75px;width:100%"><div style="position:absolute;right:1653px;top:0;line-height:23.75px;color:#6e7681">601</div><svg style="position:absolute;left:826.7px;top:2.3px" width="11" height="11" viewBox="0 0 11 11"><path d="M5.5 0.5v10M0.5 5.5h10" stroke="#8c8c8c" stroke-width="1.05"/></svg><div style="position:absolute;left:844px;top:0;line-height:23.75px;white-space:pre;color:#3b3b3b">      <span style="color:#0451a5;">"description"</span><span style="color:#3b3b3b;">: </span><span style="color:#a31515;">"Administrator - System administration"</span></div></div><div style="position:absolute;left:0;top:789.40px;height:23.75px;width:100%"><div style="position:absolute;right:1653px;top:0;line-height:23.75px;color:#6e7681">602</div><svg style="position:absolute;left:826.7px;top:2.3px" width="11" height="11" viewBox="0 0 11 11"><path d="M5.5 0.5v10M0.5 5.5h10" stroke="#8c8c8c" stroke-width="1.05"/></svg><div style="position:absolute;left:844px;top:0;line-height:23.75px;white-space:pre;color:#3b3b3b">    <span style="color:#7b3814;">}</span></div></div><div style="position:absolute;left:0;top:813.15px;height:23.75px;width:100%"><div style="position:absolute;right:1653px;top:0;line-height:23.75px;color:#6e7681">603</div><svg style="position:absolute;left:826.7px;top:2.3px" width="11" height="11" viewBox="0 0 11 11"><path d="M5.5 0.5v10M0.5 5.5h10" stroke="#8c8c8c" stroke-width="1.05"/></svg><div style="position:absolute;left:844px;top:0;line-height:23.75px;white-space:pre;color:#3b3b3b">  <span style="color:#319331;">]</span><span style="color:#3b3b3b;">,</span></div></div><div style="position:absolute;left:0;top:836.90px;height:23.75px;width:100%"><div style="position:absolute;right:1653px;top:0;line-height:23.75px;color:#6e7681">604</div><svg style="position:absolute;left:826.7px;top:2.3px" width="11" height="11" viewBox="0 0 11 11"><path d="M5.5 0.5v10M0.5 5.5h10" stroke="#8c8c8c" stroke-width="1.05"/></svg><div style="position:absolute;left:844px;top:0;line-height:23.75px;white-space:pre;color:#3b3b3b">  <span style="color:#0451a5;">"role-templates"</span><span style="color:#3b3b3b;">: </span><span style="color:#319331;">[</span></div></div><div style="position:absolute;left:0;top:860.65px;height:23.75px;width:100%"><div style="position:absolute;right:1653px;top:0;line-height:23.75px;color:#6e7681">605</div><svg style="position:absolute;left:826.7px;top:2.3px" width="11" height="11" viewBox="0 0 11 11"><path d="M5.5 0.5v10M0.5 5.5h10" stroke="#8c8c8c" stroke-width="1.05"/></svg><div style="position:absolute;left:844px;top:0;line-height:23.75px;white-space:pre;color:#3b3b3b">    <span style="color:#7b3814;">{</span></div></div><div style="position:absolute;left:0;top:884.40px;height:23.75px;width:100%"><div style="position:absolute;right:1653px;top:0;line-height:23.75px;color:#6e7681">606</div><svg style="position:absolute;left:826.7px;top:2.3px" width="11" height="11" viewBox="0 0 11 11"><path d="M5.5 0.5v10M0.5 5.5h10" stroke="#8c8c8c" stroke-width="1.05"/></svg><div style="position:absolute;left:844px;top:0;line-height:23.75px;white-space:pre;color:#3b3b3b">      <span style="color:#0451a5;">"name"</span><span style="color:#3b3b3b;">: </span><span style="color:#a31515;">"FieldWorker"</span><span style="color:#3b3b3b;">,</span></div></div><div style="position:absolute;left:0;top:908.15px;height:23.75px;width:100%"><div style="position:absolute;right:1653px;top:0;line-height:23.75px;color:#6e7681">607</div><svg style="position:absolute;left:826.7px;top:2.3px" width="11" height="11" viewBox="0 0 11 11"><path d="M5.5 0.5v10M0.5 5.5h10" stroke="#8c8c8c" stroke-width="1.05"/></svg><div style="position:absolute;left:844px;top:0;line-height:23.75px;white-space:pre;color:#3b3b3b">      <span style="color:#0451a5;">"scope-references"</span><span style="color:#3b3b3b;">: </span><span style="color:#0431fa;">[</span><span style="color:#a31515;">"$XSAPPNAME.FieldWorker"</span><span style="color:#0431fa;">]</span></div></div><div style="position:absolute;left:0;top:931.90px;height:23.75px;width:100%"><div style="position:absolute;right:1653px;top:0;line-height:23.75px;color:#6e7681">608</div><svg style="position:absolute;left:826.7px;top:2.3px" width="11" height="11" viewBox="0 0 11 11"><path d="M5.5 0.5v10M0.5 5.5h10" stroke="#8c8c8c" stroke-width="1.05"/></svg><div style="position:absolute;left:844px;top:0;line-height:23.75px;white-space:pre;color:#3b3b3b">    <span style="color:#7b3814;">}</span><span style="color:#3b3b3b;">,</span></div></div><div style="position:absolute;left:0;top:955.65px;height:23.75px;width:100%"><div style="position:absolute;right:1653px;top:0;line-height:23.75px;color:#6e7681">609</div><svg style="position:absolute;left:826.7px;top:2.3px" width="11" height="11" viewBox="0 0 11 11"><path d="M5.5 0.5v10M0.5 5.5h10" stroke="#8c8c8c" stroke-width="1.05"/></svg><div style="position:absolute;left:844px;top:0;line-height:23.75px;white-space:pre;color:#3b3b3b">    <span style="color:#7b3814;">{</span></div></div><div style="position:absolute;left:0;top:979.40px;height:23.75px;width:100%"><div style="position:absolute;right:1653px;top:0;line-height:23.75px;color:#6e7681">610</div><svg style="position:absolute;left:826.7px;top:2.3px" width="11" height="11" viewBox="0 0 11 11"><path d="M5.5 0.5v10M0.5 5.5h10" stroke="#8c8c8c" stroke-width="1.05"/></svg><div style="position:absolute;left:844px;top:0;line-height:23.75px;white-space:pre;color:#3b3b3b">      <span style="color:#0451a5;">"name"</span><span style="color:#3b3b3b;">: </span><span style="color:#a31515;">"Supervisor"</span><span style="color:#3b3b3b;">,</span></div></div><div style="position:absolute;left:0;top:1003.15px;height:23.75px;width:100%"><div style="position:absolute;right:1653px;top:0;line-height:23.75px;color:#6e7681">611</div><svg style="position:absolute;left:826.7px;top:2.3px" width="11" height="11" viewBox="0 0 11 11"><path d="M5.5 0.5v10M0.5 5.5h10" stroke="#8c8c8c" stroke-width="1.05"/></svg><div style="position:absolute;left:844px;top:0;line-height:23.75px;white-space:pre;color:#3b3b3b">      <span style="color:#0451a5;">"scope-references"</span><span style="color:#3b3b3b;">: </span><span style="color:#0431fa;">[</span><span style="color:#a31515;">"$XSAPPNAME.Supervisor"</span><span style="color:#0431fa;">]</span></div></div><div style="position:absolute;left:0;top:1026.90px;height:23.75px;width:100%"><div style="position:absolute;right:1653px;top:0;line-height:23.75px;color:#6e7681">612</div><svg style="position:absolute;left:826.7px;top:2.3px" width="11" height="11" viewBox="0 0 11 11"><path d="M5.5 0.5v10M0.5 5.5h10" stroke="#8c8c8c" stroke-width="1.05"/></svg><div style="position:absolute;left:844px;top:0;line-height:23.75px;white-space:pre;color:#3b3b3b">    <span style="color:#7b3814;">}</span><span style="color:#3b3b3b;">,</span></div></div><div style="position:absolute;left:0;top:1050.65px;height:23.75px;width:100%"><div style="position:absolute;right:1653px;top:0;line-height:23.75px;color:#6e7681">613</div><svg style="position:absolute;left:826.7px;top:2.3px" width="11" height="11" viewBox="0 0 11 11"><path d="M5.5 0.5v10M0.5 5.5h10" stroke="#8c8c8c" stroke-width="1.05"/></svg><div style="position:absolute;left:844px;top:0;line-height:23.75px;white-space:pre;color:#3b3b3b">    <span style="color:#7b3814;">{</span></div></div><div style="position:absolute;left:0;top:1074.40px;height:23.75px;width:100%"><div style="position:absolute;right:1653px;top:0;line-height:23.75px;color:#6e7681">614</div><svg style="position:absolute;left:826.7px;top:2.3px" width="11" height="11" viewBox="0 0 11 11"><path d="M5.5 0.5v10M0.5 5.5h10" stroke="#8c8c8c" stroke-width="1.05"/></svg><div style="position:absolute;left:844px;top:0;line-height:23.75px;white-space:pre;color:#3b3b3b">      <span style="color:#0451a5;">"name"</span><span style="color:#3b3b3b;">: </span><span style="color:#a31515;">"Manager"</span><span style="color:#3b3b3b;">,</span></div></div><div style="position:absolute;left:0;top:1098.15px;height:23.75px;width:100%"><div style="position:absolute;right:1653px;top:0;line-height:23.75px;color:#6e7681">615</div><svg style="position:absolute;left:826.7px;top:2.3px" width="11" height="11" viewBox="0 0 11 11"><path d="M5.5 0.5v10M0.5 5.5h10" stroke="#8c8c8c" stroke-width="1.05"/></svg><div style="position:absolute;left:844px;top:0;line-height:23.75px;white-space:pre;color:#3b3b3b">      <span style="color:#0451a5;">"scope-references"</span><span style="color:#3b3b3b;">: </span><span style="color:#0431fa;">[</span><span style="color:#a31515;">"$XSAPPNAME.Manager"</span><span style="color:#0431fa;">]</span></div></div><div style="position:absolute;left:0;top:1121.90px;height:23.75px;width:100%"><div style="position:absolute;right:1653px;top:0;line-height:23.75px;color:#6e7681">616</div><svg style="position:absolute;left:826.7px;top:2.3px" width="11" height="11" viewBox="0 0 11 11"><path d="M5.5 0.5v10M0.5 5.5h10" stroke="#8c8c8c" stroke-width="1.05"/></svg><div style="position:absolute;left:844px;top:0;line-height:23.75px;white-space:pre;color:#3b3b3b">    <span style="color:#7b3814;">}</span><span style="color:#3b3b3b;">,</span></div></div><div style="position:absolute;left:844px;top:266.90px;width:1px;height:878.75px;background:#c3cfa0"></div><div style="position:absolute;left:882px;top:361.90px;width:1px;height:47.50px;background:#c3cfa0"></div><div style="position:absolute;left:882px;top:456.90px;width:1px;height:47.50px;background:#c3cfa0"></div><div style="position:absolute;left:882px;top:551.90px;width:1px;height:47.50px;background:#c3cfa0"></div><div style="position:absolute;left:882px;top:646.90px;width:1px;height:47.50px;background:#c3cfa0"></div><div style="position:absolute;left:882px;top:741.90px;width:1px;height:47.50px;background:#c3cfa0"></div><div style="position:absolute;left:882px;top:884.40px;width:1px;height:47.50px;background:#c3cfa0"></div><div style="position:absolute;left:882px;top:979.40px;width:1px;height:47.50px;background:#c3cfa0"></div><div style="position:absolute;left:882px;top:1074.40px;width:1px;height:47.50px;background:#c3cfa0"></div></div>
<div style="position:absolute;left:773px;top:254px;width:1706px;height:71.25px;padding-top:0;background:#ffffff;box-shadow:0 2px 4px -1px rgba(0,0,0,0.10);font-family:'Liberation Mono', monospace;font-size:16px;"><div style="position:absolute;right:1653px;top:1.50px;line-height:23.75px;color:#6e7681">1</div><div style="position:absolute;left:71px;top:1.50px;line-height:23.75px;white-space:pre;color:#800000;font-weight:700"># Field Ticket Management Solution - Solution Design Document</div><div style="position:absolute;right:1653px;top:25.25px;line-height:23.75px;color:#6e7681">434</div><div style="position:absolute;left:71px;top:25.25px;line-height:23.75px;white-space:pre;color:#800000;font-weight:700">## 5. Business Logic &amp; Workflows</div><div style="position:absolute;right:1653px;top:49.00px;line-height:23.75px;color:#6e7681">523</div><div style="position:absolute;left:71px;top:49.00px;line-height:23.75px;white-space:pre;color:#800000;font-weight:700">### 5.3 SAP S/4HANA Integration</div></div>
<div style="position:absolute;left:1799px;top:1396.00px;height:20px;line-height:20px;font-size:14.3px;color:#3b3b3b;font-weight:400;font-family:'Liberation Sans', sans-serif;white-space:pre;">Ln 317, Col 34 (18 selected)</div>
<div style="position:absolute;left:2000px;top:1396.50px;height:19px;line-height:19px;font-size:13.6px;color:#3b3b3b;font-weight:400;font-family:'Liberation Sans', sans-serif;white-space:pre;">Spaces: 4</div>
<div style="position:absolute;left:2081px;top:1396.00px;height:20px;line-height:20px;font-size:14.3px;color:#3b3b3b;font-weight:400;font-family:'Liberation Sans', sans-serif;white-space:pre;">UTF-8</div>
<div style="position:absolute;left:2141px;top:1397.00px;height:18px;line-height:18px;font-size:12.6px;color:#3b3b3b;font-weight:400;font-family:'Liberation Sans', sans-serif;white-space:pre;">LF</div>
<div style="position:absolute;left:2176px;top:1394.50px;height:22px;line-height:22px;font-size:16px;color:#3b3b3b;font-weight:400;font-family:'Liberation Sans', sans-serif;white-space:pre;">{ }</div>
<div style="position:absolute;left:2203px;top:1395.50px;height:21px;line-height:21px;font-size:15px;color:#3b3b3b;font-weight:400;font-family:'Liberation Sans', sans-serif;white-space:pre;">Markdown</div>
<div style="position:absolute;left:2293px;top:1396.00px;height:20px;line-height:20px;font-size:14.5px;color:#3b3b3b;font-weight:400;font-family:'Liberation Sans', sans-serif;white-space:pre;">abaplint: Ready</div>
<div style="position:absolute;left:2414px;top:1396.00px;height:20px;line-height:20px;font-size:14.1px;color:#3b3b3b;font-weight:400;font-family:'Liberation Sans', sans-serif;white-space:pre;">Layout: US</div>
<svg style="position:absolute;left:2503.50px;top:1395.50px;" width="21" height="21" viewBox="0 0 24 24" fill="none" stroke="#3b3b3b" stroke-width="1.3" stroke-linecap="round" stroke-linejoin="round"><path d="M6.5 9.5a5.5 5.5 0 0 1 11 0v5l2.2 3H4.3l2.2-3z"/><path d="M10 20.5a2 2 0 0 0 4 0"/></svg></body></html>
